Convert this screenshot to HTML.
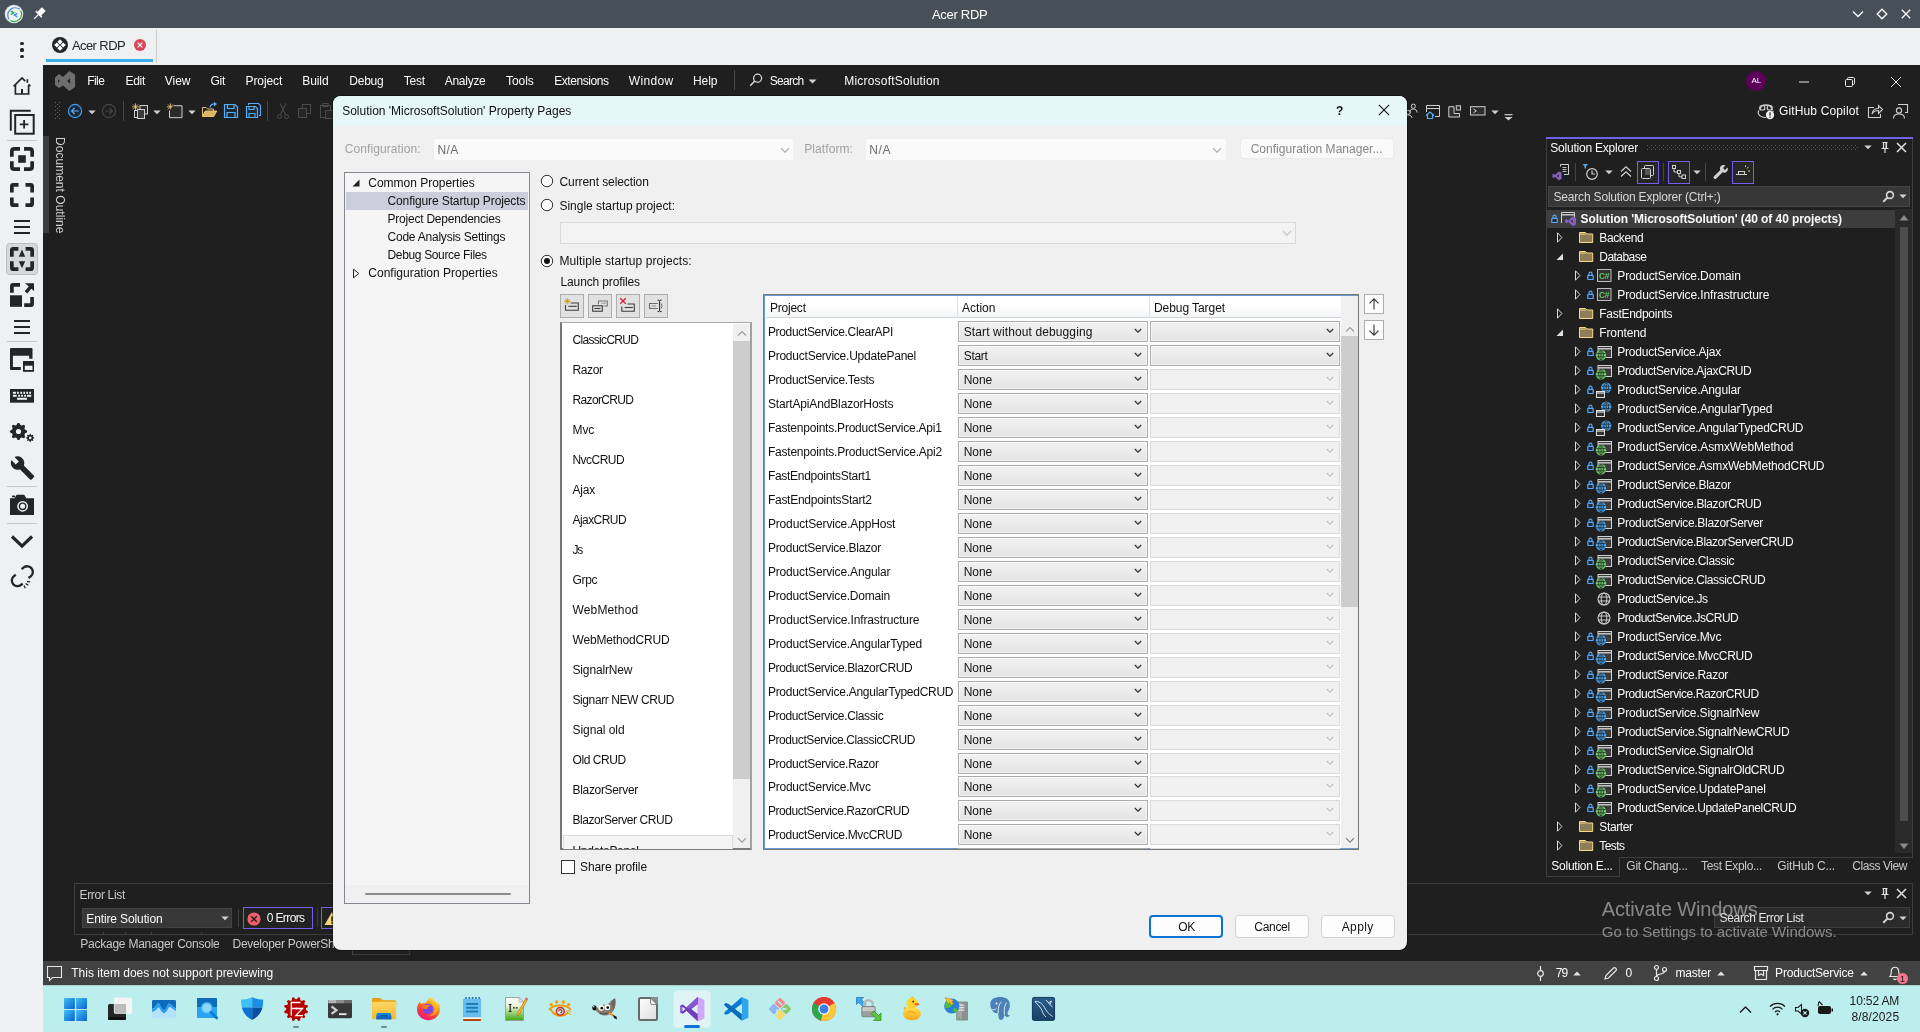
<!DOCTYPE html>
<html><head><meta charset="utf-8"><title>Acer RDP</title>
<style>
html,body{margin:0;padding:0;background:#1f1f1f}
#r{will-change:transform;position:relative;width:1920px;height:1032px;overflow:hidden;font-family:"Liberation Sans",sans-serif}
#r div,#r svg,#r span{position:absolute}
#r .t{white-space:pre;line-height:20px;height:20px}
#r svg{overflow:visible}
</style></head><body><div id="r">
<div style="left:0px;top:0px;width:1920px;height:28px;background:#475059"></div>
<span class="t" style="left:932px;top:5.300000000000001px;font-size:13px;color:#fcfcfc;letter-spacing:-0.299px;">Acer RDP</span>
<svg style="left:4px;top:4px;" width="20" height="20" viewBox="0 0 20 20"><circle cx="10" cy="10" r="9.300" fill="#d9dde0"/><circle cx="10" cy="10" r="8.600" fill="#f4f1e9"/>
<path d="M5.100 15.400A7.400 7.400 0 0 1 15.700 5.300" fill="none" stroke="#3a8ee6" stroke-width="1.200"/>
<path d="M16.600 6.600A7.400 7.400 0 0 1 6.400 16.500" fill="none" stroke="#27ae60" stroke-width="1.200"/>
<path d="M6.800 6.900l3 1.900-3 1.900" fill="none" stroke="#27ae60" stroke-width="1.400"/><path d="M13.200 9.300l-2.800 1.800 2.800 1.800" fill="none" stroke="#3a8ee6" stroke-width="1.400"/></svg>
<svg style="left:31px;top:6px;" width="16" height="16" viewBox="0 0 16 16"><g transform="rotate(45 8 8)" fill="#fcfcfc"><rect x="5.3" y="1.2" width="5.4" height="6.6"/><rect x="3.8" y="7.4" width="8.4" height="1.6"/><rect x="7.4" y="9" width="1.2" height="6"/></g></svg>
<svg style="left:1850px;top:6px;" width="16" height="16" viewBox="0 0 16 16"><path d="M3 5.5l5 5 5-5" fill="none" stroke="#fcfcfc" stroke-width="1.3"/></svg>
<svg style="left:1874px;top:6px;" width="16" height="16" viewBox="0 0 16 16"><path d="M8 3.2L12.8 8 8 12.8 3.2 8z" fill="none" stroke="#fcfcfc" stroke-width="1.3"/></svg>
<svg style="left:1898px;top:6px;" width="16" height="16" viewBox="0 0 16 16"><path d="M3.8 3.8l8.4 8.4M12.2 3.8l-8.4 8.4" fill="none" stroke="#fcfcfc" stroke-width="1.3"/></svg>
<div style="left:0px;top:28px;width:1920px;height:37px;background:#eff0f1"></div>
<div style="left:0px;top:65px;width:43px;height:967px;background:#eff0f1"></div>
<div style="left:46px;top:59px;width:107px;height:3px;background:#3daee9"></div>
<div style="left:156px;top:30px;width:1px;height:33px;background:#c9cbcd"></div>
<svg style="left:51px;top:36px;" width="18" height="18" viewBox="0 0 18 18"><circle cx="9" cy="9" r="8" fill="#232629"/><g fill="#fff"><path d="M9 3.2l2.6 2.6L9 8.4 6.4 5.8z"/><path d="M9 9.6l2.6 2.6L9 14.8 6.4 12.2z"/><path d="M5.8 6.4l2.6 2.6-2.6 2.6L3.2 9z"/><path d="M12.2 6.4l2.6 2.6-2.6 2.6L9.6 9z"/></g></svg>
<span class="t" style="left:72px;top:35.7px;font-size:13px;color:#232629;letter-spacing:-0.599px;">Acer RDP</span>
<svg style="left:134px;top:39px;" width="12" height="12" viewBox="0 0 12 12"><circle cx="6" cy="6" r="6" fill="#da4453"/><path d="M3.6 3.6l4.8 4.8M8.4 3.6L3.6 8.4" stroke="#fff" stroke-width="1.2"/></svg>
<div style="left:20.4px;top:42.1px;width:3.2px;height:3.2px;background:#232629;border-radius:50%"></div>
<div style="left:20.4px;top:48.4px;width:3.2px;height:3.2px;background:#232629;border-radius:50%"></div>
<div style="left:20.4px;top:54.6px;width:3.2px;height:3.2px;background:#232629;border-radius:50%"></div>
<svg style="left:10px;top:74px;" width="24" height="24" viewBox="0 0 24 24"><path d="M3.6 12.4L12 4l3.2 3.2M18.6 10.4l1.8 1.8" fill="none" stroke="#232629" stroke-width="1.7"/><path d="M5.4 11v9h13.2v-9" fill="none" stroke="#232629" stroke-width="1.7"/><rect x="11" y="15" width="2" height="5" fill="#232629"/><rect x="16.5" y="5.2" width="1.7" height="3.6" fill="#232629"/></svg>
<svg style="left:8px;top:108px;" width="28" height="28" viewBox="0 0 28 28"><path d="M2.8 22.8V2.8H22.8" fill="none" stroke="#232629" stroke-width="2"/><rect x="7.2" y="7" width="18.5" height="18.7" fill="none" stroke="#232629" stroke-width="2"/><path d="M11.8 16.3h8.6M16.1 12v8.6" fill="none" stroke="#232629" stroke-width="1.8"/></svg>
<div style="left:7px;top:140px;width:30px;height:1px;background:#c4c6c8"></div>
<svg style="left:10px;top:147px;" width="24" height="24" viewBox="0 0 24 24"><path d="M1.85 9.8V4.35Q1.85 1.85 4.35 1.85H10M14 1.85H19.65Q22.15 1.85 22.15 4.35V9.8M22.15 14.2V19.65Q22.15 22.15 19.65 22.15H14M10 22.15H4.35Q1.85 22.15 1.85 19.65V14.2" fill="none" stroke="#232629" stroke-width="3.7"/><rect x="8.2" y="8.2" width="7.6" height="7.6" fill="#232629"/></svg>
<svg style="left:10px;top:183.2px;" width="24" height="24" viewBox="0 0 24 24"><path d="M1.85 9.6V3.35Q1.85 1.85 3.35 1.85H8.5M15.5 1.85H20.65Q22.15 1.85 22.15 3.35V9.6M22.15 14.4V20.65Q22.15 22.15 20.65 22.15H15.5M8.5 22.15H3.35Q1.85 22.15 1.85 20.65V14.4" fill="none" stroke="#232629" stroke-width="3.7"/></svg>
<div style="left:14px;top:219.7px;width:16px;height:2.6px;background:#232629"></div>
<div style="left:14px;top:225.7px;width:16px;height:2.6px;background:#232629"></div>
<div style="left:14px;top:231.7px;width:16px;height:2.6px;background:#232629"></div>
<div style="left:6px;top:243px;width:32px;height:31.7px;background:#d6d8da;border:1px solid #bcbec0;border-radius:3.500px;box-sizing:border-box"></div>
<svg style="left:10px;top:247px;" width="24" height="24" viewBox="0 0 24 24"><path d="M1.85 9.7V3.35Q1.85 1.85 3.35 1.85H8.4M15.6 1.85H20.65Q22.15 1.85 22.15 3.35V9.7M22.15 14.3V20.65Q22.15 22.15 20.65 22.15H15.6M8.4 22.15H3.35Q1.85 22.15 1.85 20.65V14.3" fill="none" stroke="#232629" stroke-width="3.7"/><path d="M12 2.600L15.200 9.700H8.800zM12 21.200L15.200 14.200H8.800z" fill="#232629"/></svg>
<svg style="left:10px;top:283px;" width="24" height="24" viewBox="0 0 24 24"><rect x="0" y="12.300" width="12" height="11.500" fill="#232629"/><path d="M1.900 9.700V3Q1.900 1.900 3 1.900H10" fill="none" stroke="#232629" stroke-width="3.700"/><path d="M22.100 14V21Q22.100 22.100 21 22.100H14.200" fill="none" stroke="#232629" stroke-width="3.700"/><path d="M16 9.300L21.500 2.800" fill="none" stroke="#232629" stroke-width="3.400"/><path d="M15 .2H24V8z" fill="#232629"/></svg>
<div style="left:14px;top:319.7px;width:16px;height:2.6px;background:#232629"></div>
<div style="left:14px;top:325.7px;width:16px;height:2.6px;background:#232629"></div>
<div style="left:14px;top:331.7px;width:16px;height:2.6px;background:#232629"></div>
<div style="left:7px;top:341px;width:30px;height:1px;background:#c4c6c8"></div>
<svg style="left:10px;top:348px;" width="24" height="24" viewBox="0 0 24 24"><path d="M1 0H21.500Q22.500 0 22.500 1V10.800H19.200V7.800H2.900V19H10.800V22H1Q0 22 0 21V1Q0 0 1 0z" fill="#232629"/><rect x="13" y="13" width="11" height="10.800" fill="#232629"/><rect x="14.800" y="17.700" width="7.700" height="4.300" fill="#eff0f1"/></svg>
<svg style="left:10px;top:389.2px;" width="24" height="13.7" viewBox="0 0 24 13.7"><rect width="24" height="13.700" fill="#232629"/><rect x="2.900" y="2.800" width="3" height="2" fill="#eff0f1"/><rect x="7" y="2.800" width="1.800" height="2" fill="#eff0f1"/><rect x="10.25" y="2.800" width="1.800" height="2" fill="#eff0f1"/><rect x="13.3" y="2.800" width="1.800" height="2" fill="#eff0f1"/><rect x="16.25" y="2.800" width="1.800" height="2" fill="#eff0f1"/><rect x="19.2" y="2.800" width="1.800" height="2" fill="#eff0f1"/><rect x="2.900" y="5.800" width="3.800" height="2" fill="#eff0f1"/><rect x="17" y="5.800" width="4.250" height="2" fill="#eff0f1"/><rect x="8.2" y="5.800" width="1.800" height="2" fill="#eff0f1"/><rect x="11.2" y="5.800" width="1.800" height="2" fill="#eff0f1"/><rect x="14.2" y="5.800" width="1.800" height="2" fill="#eff0f1"/><rect x="7" y="8.800" width="10" height="2" fill="#eff0f1"/></svg>
<svg style="left:10px;top:421px;" width="24" height="24" viewBox="0 0 24 24"><path d="M17.06 9.66L17.06 11.34L14.91 12.44L14.41 13.66L15.15 15.96L13.96 17.15L11.66 16.41L10.44 16.91L9.34 19.06L7.66 19.06L6.56 16.91L5.34 16.41L3.04 17.15L1.85 15.96L2.59 13.66L2.09 12.44L-0.06 11.34L-0.06 9.66L2.09 8.56L2.59 7.34L1.85 5.04L3.04 3.85L5.34 4.59L6.56 4.09L7.66 1.94L9.34 1.94L10.44 4.09L11.66 4.59L13.96 3.85L15.15 5.04L14.41 7.34L14.91 8.56Z" fill="#232629"/><circle cx="8.5" cy="10.5" r="2.6" fill="#eff0f1"/><path d="M24.28 16.50L24.28 17.30L23.07 17.77L22.85 18.31L23.37 19.50L22.80 20.07L21.61 19.55L21.07 19.77L20.60 20.98L19.80 20.98L19.33 19.77L18.79 19.55L17.60 20.07L17.03 19.50L17.55 18.31L17.33 17.77L16.12 17.30L16.12 16.50L17.33 16.03L17.55 15.49L17.03 14.30L17.60 13.73L18.79 14.25L19.33 14.03L19.80 12.82L20.60 12.82L21.07 14.03L21.61 14.25L22.80 13.73L23.37 14.30L22.85 15.49L23.07 16.03Z" fill="#232629"/><circle cx="20.2" cy="16.9" r="1.3" fill="#eff0f1"/></svg>
<svg style="left:10px;top:456px;" width="24" height="25" viewBox="0 0 24 25"><path d="M22.4 20.6L11.6 9.8c1-2.7.4-5.8-1.8-7.9C7.5-.4 4.1-.8 1.4.4l4.8 4.8-3.4 3.4L-1.900 3.800C-3.200 6.500-2.700 9.900-.400 12.200c2.100 2.100 5.200 2.700 7.900 1.800l10.800 10.800c.5.5 1.200.5 1.700 0l2.400-2.400c.600-.500.600-1.300 0-1.800z" fill="#232629" transform="translate(3.2 0.6) scale(.92)"/></svg>
<div style="left:7px;top:486px;width:30px;height:1px;background:#c4c6c8"></div>
<svg style="left:10px;top:494px;" width="24" height="21" viewBox="0 0 24 21"><path d="M0 4.300h4.500L6.600.8h7.600l2.100 3.500H24V21H0z" fill="#232629"/><circle cx="12.600" cy="12.300" r="5.400" fill="#eff0f1"/><circle cx="12.600" cy="12.300" r="3.900" fill="#232629"/><circle cx="12.600" cy="12.300" r="2.500" fill="#eff0f1"/><rect x="2" y="1.600" width="3" height="1.700" fill="#232629"/></svg>
<div style="left:7px;top:523px;width:30px;height:1px;background:#c4c6c8"></div>
<svg style="left:10px;top:533px;" width="24" height="17" viewBox="0 0 24 17"><path d="M2 3.500l10 9.600 10-9.600" fill="none" stroke="#232629" stroke-width="3.2"/></svg>
<svg style="left:10px;top:565px;" width="24" height="26" viewBox="0 0 24 26"><path d="M9.5 9.500H7.200a5.600 5.600 0 0 0 0 11.200H9.500" fill="none" stroke="#232629" stroke-width="2.300" transform="rotate(-38 8 15)"/><path d="M14 3h2.800a5.600 5.600 0 0 1 0 11.200H14" fill="none" stroke="#232629" stroke-width="2.300" transform="rotate(-38 16 9) translate(1.500 -.5)"/><path d="M15.500 18.500l2.800 1.600M14 20.500l1.300 2.800M17 16.500l3.200.3" fill="none" stroke="#232629" stroke-width="1.300"/></svg>
<div style="left:43px;top:65px;width:1877px;height:920px;background:#1f1f1f"></div>
<svg style="left:55px;top:71px;" width="20" height="20" viewBox="0 0 20 20"><path d="M14.250 0L20.100 3.600V15.900L14.250 20L8 14.400L4 17.100L0 14V6.500L4 3L8 6.100ZM3 8.200V11.900L4.900 10ZM12.200 10L15.100 7.100V12.800Z" fill="#6e6e6e" fill-rule="evenodd"/></svg>
<span class="t" style="left:87.25px;top:71.0px;font-size:12px;color:#fafafa;letter-spacing:-0.584px;">File</span>
<span class="t" style="left:125.5px;top:71.0px;font-size:12px;color:#fafafa;letter-spacing:-0.295px;">Edit</span>
<span class="t" style="left:164.75px;top:71.0px;font-size:12px;color:#fafafa;letter-spacing:-0.011px;">View</span>
<span class="t" style="left:210.5px;top:71.0px;font-size:12px;color:#fafafa;letter-spacing:-0.278px;">Git</span>
<span class="t" style="left:245.5px;top:71.0px;font-size:12px;color:#fafafa;letter-spacing:-0.086px;">Project</span>
<span class="t" style="left:302.25px;top:71.0px;font-size:12px;color:#fafafa;letter-spacing:-0.087px;">Build</span>
<span class="t" style="left:349.25px;top:71.0px;font-size:12px;color:#fafafa;letter-spacing:-0.222px;">Debug</span>
<span class="t" style="left:403.75px;top:71.0px;font-size:12px;color:#fafafa;letter-spacing:-0.189px;">Test</span>
<span class="t" style="left:444.75px;top:71.0px;font-size:12px;color:#fafafa;letter-spacing:-0.278px;">Analyze</span>
<span class="t" style="left:506px;top:71.0px;font-size:12px;color:#fafafa;letter-spacing:-0.053px;">Tools</span>
<span class="t" style="left:554.25px;top:71.0px;font-size:12px;color:#fafafa;letter-spacing:-0.445px;">Extensions</span>
<span class="t" style="left:628.75px;top:71.0px;font-size:12px;color:#fafafa;letter-spacing:0.345px;">Window</span>
<span class="t" style="left:693px;top:71.0px;font-size:12px;color:#fafafa;letter-spacing:-0.045px;">Help</span>
<span class="t" style="left:769.75px;top:71.0px;font-size:12px;color:#fafafa;letter-spacing:-0.712px;">Search</span>
<span class="t" style="left:844.25px;top:71.0px;font-size:12px;color:#fafafa;letter-spacing:0.203px;">MicrosoftSolution</span>
<div style="left:734px;top:70px;width:1px;height:20px;background:#464646"></div>
<svg style="left:749px;top:73px;" width="14" height="14" viewBox="0 0 14 14"><circle cx="8.600" cy="5.200" r="4" fill="none" stroke="#d6d6d6" stroke-width="1.300"/><path d="M5.800 8L1.200 12.800" stroke="#d6d6d6" stroke-width="1.500"/></svg>
<svg style="left:808px;top:79px;" width="9" height="5" viewBox="0 0 9 5"><path d="M0.500 0.500h8L4.500 4.500z" fill="#d0d0d0"/></svg>
<div style="left:1746px;top:71px;width:20px;height:20px;background:#5c005c;border-radius:10px"></div>
<span class="t" style="left:1751.5px;top:71.3px;font-size:8px;color:#fff;letter-spacing:-0.143px;">AL</span>
<svg style="left:1796px;top:74px;" width="16" height="16" viewBox="0 0 16 16"><path d="M3 8h10" stroke="#e8e8e8" stroke-width="1"/></svg>
<svg style="left:1842px;top:74px;" width="16" height="16" viewBox="0 0 16 16"><rect x="3.500" y="5.500" width="7" height="7" rx="1.200" fill="none" stroke="#e8e8e8"/><path d="M5.500 5.500V4.700Q5.500 3.500 6.700 3.500H11.300Q12.500 3.500 12.500 4.700V9.300Q12.500 10.500 11.300 10.500H10.500" fill="none" stroke="#e8e8e8"/></svg>
<svg style="left:1888px;top:74px;" width="16" height="16" viewBox="0 0 16 16"><path d="M3 3l10 10M13 3L3 13" stroke="#e8e8e8" stroke-width="1"/></svg>
<svg style="left:55px;top:102px;" width="6" height="18" viewBox="0 0 6 18"><rect x="0" y="0" width="1" height="1" fill="#606060"/><rect x="4" y="0" width="1" height="1" fill="#606060"/><rect x="2" y="2" width="1" height="1" fill="#606060"/><rect x="0" y="4" width="1" height="1" fill="#606060"/><rect x="4" y="4" width="1" height="1" fill="#606060"/><rect x="2" y="6" width="1" height="1" fill="#606060"/><rect x="0" y="8" width="1" height="1" fill="#606060"/><rect x="4" y="8" width="1" height="1" fill="#606060"/><rect x="2" y="10" width="1" height="1" fill="#606060"/><rect x="0" y="12" width="1" height="1" fill="#606060"/><rect x="4" y="12" width="1" height="1" fill="#606060"/><rect x="2" y="14" width="1" height="1" fill="#606060"/><rect x="0" y="16" width="1" height="1" fill="#606060"/><rect x="4" y="16" width="1" height="1" fill="#606060"/></svg>
<svg style="left:67px;top:103px;" width="16" height="16" viewBox="0 0 16 16"><circle cx="8" cy="8" r="6.600" fill="#1c2a38" stroke="#3d9cf0" stroke-width="1.200"/><path d="M11.800 8H4.800M7.600 5L4.600 8l3 3" fill="none" stroke="#58aef8" stroke-width="1.200"/></svg>
<svg style="left:88.25px;top:110px;" width="8" height="5" viewBox="0 0 8 5"><path d="M0.300 0.500h7.400L4 4.300z" fill="#d0d0d0"/></svg>
<svg style="left:100.5px;top:103px;" width="16" height="16" viewBox="0 0 16 16"><circle cx="8" cy="8" r="6.600" fill="none" stroke="#454545" stroke-width="1.200"/><path d="M4.200 8H11.200M8.400 5l3 3-3 3" fill="none" stroke="#454545" stroke-width="1.200"/></svg>
<div style="left:123px;top:101px;width:1px;height:20px;background:#464646"></div>
<svg style="left:131px;top:102px;" width="18" height="18" viewBox="0 0 18 18"><g stroke="#f3cf73" stroke-width=".8"><path d="M1.0 4.9h7M4.5 1.4000000000000004v7M2.0 2.4000000000000004l5 5M7.0 2.4000000000000004l-5 5"/></g><rect x="9" y="3.500" width="7.500" height="8.500" fill="#2a2a2a" stroke="#cfcfcf"/><rect x="3.500" y="8.500" width="6" height="7" fill="none" stroke="#cfcfcf"/><rect x="6.500" y="7.500" width="7" height="9" fill="#3a3a3a" stroke="#cfcfcf"/></svg>
<svg style="left:153.25px;top:110px;" width="8" height="5" viewBox="0 0 8 5"><path d="M0.300 0.500h7.400L4 4.300z" fill="#d0d0d0"/></svg>
<svg style="left:166px;top:102px;" width="18" height="18" viewBox="0 0 18 18"><g stroke="#f3cf73" stroke-width=".8"><path d="M0.9000000000000004 4.9h7M4.4 1.4000000000000004v7M1.9000000000000004 2.4000000000000004l5 5M6.9 2.4000000000000004l-5 5"/></g><path d="M7.500 3.700H16V15.700H3.500V8.500" fill="#2a2a2a" stroke="#cfcfcf"/></svg>
<svg style="left:188.25px;top:110px;" width="8" height="5" viewBox="0 0 8 5"><path d="M0.300 0.500h7.400L4 4.300z" fill="#d0d0d0"/></svg>
<svg style="left:201px;top:101px;" width="18" height="18" viewBox="0 0 18 18"><path d="M1.500 15.500V6.500H5l1.500 1.500H12.500V10" fill="none" stroke="#e8c36d"/><path d="M1.500 15.500L4.300 10H15.700L12.800 15.500z" fill="#dcb565" stroke="#e8c36d"/><path d="M9 6.500C9.500 3.500 12 2.800 14.500 3" fill="none" stroke="#58aef8" stroke-width="1.300"/><path d="M13 .8l3 2.300-3 2.300z" fill="#58aef8"/></svg>
<svg style="left:223px;top:103px;" width="16" height="16" viewBox="0 0 16 16"><path d="M1.500 1.500H12L14.500 4V14.500H1.500z" fill="#1c2a38" stroke="#58aef8" stroke-width="1.200"/><path d="M4.500 1.500V5.500H11V1.500M4 14.500V9.500H12V14.500" fill="none" stroke="#58aef8" stroke-width="1.200"/></svg>
<svg style="left:245px;top:102px;" width="17" height="17" viewBox="0 0 17 17"><path d="M3.500 3V1.500H13.500L15.500 3.500V13.500H14" fill="none" stroke="#58aef8" stroke-width="1.100"/><path d="M1.500 4.500H10.500L12.500 6.500V15.500H1.500z" fill="#1c2a38" stroke="#58aef8" stroke-width="1.200"/><path d="M4 4.500V7.500H9V4.500M4 15.500V11.500H10V15.500" fill="none" stroke="#58aef8" stroke-width="1.100"/></svg>
<div style="left:267px;top:101px;width:1px;height:20px;background:#464646"></div>
<svg style="left:276px;top:102px;" width="14" height="18" viewBox="0 0 14 18"><path d="M4 1.500L9.500 12.500M10 1.500L4.500 12.500" stroke="#4a4a4a" stroke-width="1.100" fill="none"/><circle cx="3.500" cy="14.500" r="2" fill="none" stroke="#4a4a4a"/><circle cx="10.500" cy="14.500" r="2" fill="none" stroke="#4a4a4a"/></svg>
<svg style="left:297px;top:103px;" width="16" height="16" viewBox="0 0 16 16"><rect x="5.500" y="1.500" width="8" height="9" fill="none" stroke="#4a4a4a"/><rect x="1.500" y="5.500" width="8" height="9" fill="#262626" stroke="#4a4a4a"/></svg>
<svg style="left:319px;top:102px;" width="16" height="18" viewBox="0 0 16 18"><rect x="1.500" y="3.500" width="10" height="12" fill="none" stroke="#4a4a4a"/><rect x="4" y="1.500" width="5" height="3" fill="none" stroke="#4a4a4a"/><rect x="6.500" y="8.500" width="8" height="8" fill="#262626" stroke="#4a4a4a"/></svg>
<svg style="left:1403px;top:103px;" width="16" height="16" viewBox="0 0 16 16"><circle cx="10.300" cy="3.200" r="2.100" fill="none" stroke="#cfcfcf"/><path d="M6.800 9.500C6.800 7 8.300 6 10.300 6S14 7.200 14.200 9.500" fill="none" stroke="#cfcfcf"/><circle cx="5.300" cy="9.400" r="2" fill="none" stroke="#cfcfcf"/><path d="M1.500 15.500C1.500 13 3 12 5.300 12S8.800 13.500 9 15" fill="none" stroke="#cfcfcf"/></svg>
<svg style="left:1425px;top:103px;" width="16" height="16" viewBox="0 0 16 16"><path d="M1.500 9V2.500H14.500V13.500H10" fill="none" stroke="#cfcfcf"/><path d="M1.500 5.500H14.500" stroke="#cfcfcf"/><path d="M1 12.500L5 9l4 3.500M2.500 11.500V15.500H7.500V11.500" fill="none" stroke="#58aef8" stroke-width="1.200"/></svg>
<svg style="left:1448px;top:105px;" width="14" height="13" viewBox="0 0 14 13"><path d="M0.800 1.700H6V8.500H11.500V12H0.800Z" fill="#2d2d2d" stroke="#cfcfcf" stroke-width="1"/><rect x="8.300" y="0.800" width="4.200" height="4.200" fill="#2d2d2d" stroke="#cfcfcf" stroke-width="1"/></svg>
<svg style="left:1469.5px;top:105.5px;" width="16" height="10" viewBox="0 0 16 10"><rect x="0.500" y="0.700" width="14.500" height="8.300" fill="#2d2d2d" stroke="#cfcfcf"/><path d="M3.500 3L6.300 4.900 3.500 6.800" fill="none" stroke="#cfcfcf"/></svg>
<svg style="left:1491px;top:109.5px;" width="8" height="5" viewBox="0 0 8 5"><path d="M0.300 0.500h7.400L4 4.300z" fill="#d0d0d0"/></svg>
<svg style="left:1503.5px;top:113px;" width="9" height="8" viewBox="0 0 9 8"><path d="M0.500 1.700H8.500" stroke="#cfcfcf" stroke-width="1.200"/><path d="M0.500 4h8L4.500 7.500z" fill="#cfcfcf"/></svg>
<svg style="left:1757px;top:102px;" width="18" height="18" viewBox="0 0 18 18"><path d="M3 8C3 4.500 5 3 9 3s6 1.500 6 5" fill="none" stroke="#cfcfcf" stroke-width="1.300"/><rect x="2.800" y="3.500" width="5" height="4.500" rx="2" fill="none" stroke="#cfcfcf" stroke-width="1.200"/><rect x="10.200" y="3.500" width="5" height="4.500" rx="2" fill="none" stroke="#cfcfcf" stroke-width="1.200"/><path d="M2 8.500C1 9.500 1 11 1.500 12 3 14.500 6 15.500 9 15.500" fill="none" stroke="#cfcfcf" stroke-width="1.200"/><path d="M16 8.500V10" stroke="#cfcfcf" stroke-width="1.200"/><circle cx="13" cy="13" r="4.200" fill="#f0f0f0"/><rect x="12.400" y="10.300" width="1.200" height="3.400" fill="#1f1f1f"/><rect x="12.400" y="14.500" width="1.200" height="1.200" fill="#1f1f1f"/></svg>
<span class="t" style="left:1779px;top:101.0px;font-size:12px;color:#fafafa;letter-spacing:0.140px;">GitHub Copilot</span>
<svg style="left:1867px;top:103px;" width="17" height="16" viewBox="0 0 17 16"><path d="M7 4.500H1.500V14.500H13.500V11" fill="none" stroke="#cfcfcf" stroke-width="1.100"/><path d="M5 11C5.500 7.500 8 5.500 11.500 5.500V2.500L15.500 6.500 11.500 10.500V7.500C8.500 7.500 6.500 8.500 5 11z" fill="none" stroke="#cfcfcf" stroke-width="1.100"/></svg>
<svg style="left:1892px;top:103px;" width="17" height="16" viewBox="0 0 17 16"><path d="M6 1.500H15.500V9.500H13" fill="none" stroke="#cfcfcf" stroke-width="1.100"/><circle cx="7" cy="7.500" r="2.600" fill="none" stroke="#cfcfcf" stroke-width="1.100"/><path d="M1.500 15.500C1.500 12.500 3.500 11 7 11s5.500 1.500 5.500 4.500" fill="none" stroke="#cfcfcf" stroke-width="1.100"/></svg>
<div style="left:43px;top:136px;width:6px;height:97px;background:#3d3d3d"></div>
<span class="t" style="left:67px;top:136.700px;font-size:12px;color:#d0d0d0;transform-origin:0 0;transform:rotate(90deg);letter-spacing:0.028px;line-height:14px">Document Outline</span>
<div style="left:74px;top:883px;width:1839px;height:52px;border:1px solid #3d3d3d;box-sizing:border-box"></div>
<span class="t" style="left:79.5px;top:884.8px;font-size:12px;color:#c8c8c8;letter-spacing:-0.318px;">Error List</span>
<div style="left:82px;top:908px;width:150px;height:20px;background:#383838;border:1px solid #434343;box-sizing:border-box"></div>
<span class="t" style="left:86.3px;top:909.0px;font-size:12px;color:#fafafa;letter-spacing:-0.123px;">Entire Solution</span>
<svg style="left:221px;top:916px;" width="8" height="5" viewBox="0 0 8 5"><path d="M0.300 0.500h7.400L4 4.300z" fill="#d0d0d0"/></svg>
<div style="left:238px;top:909px;width:1px;height:18px;background:#3d3d3d"></div>
<div style="left:243px;top:907px;width:70px;height:22px;border:1px solid #7160e8;box-sizing:border-box;background:#222"></div>
<svg style="left:246.5px;top:911.5px;" width="14" height="14" viewBox="0 0 14 14"><circle cx="7" cy="7" r="6.600" fill="#ee5f6b"/><path d="M4.200 4.200l5.600 5.600M9.800 4.200L4.200 9.800" stroke="#1f1f1f" stroke-width="1.300"/></svg>
<span class="t" style="left:266.7px;top:907.7px;font-size:12px;color:#fafafa;letter-spacing:-0.609px;">0 Errors</span>
<div style="left:316.5px;top:909px;width:1px;height:18px;background:#3d3d3d"></div>
<div style="left:321px;top:907px;width:70px;height:22px;border:1px solid #7160e8;box-sizing:border-box;background:#222"></div>
<svg style="left:324px;top:911px;" width="16" height="15" viewBox="0 0 16 15"><path d="M8 1L15.500 14H.5z" fill="#f5d67b"/><rect x="7.300" y="5.500" width="1.500" height="5" fill="#1f1f1f"/><rect x="7.300" y="11.300" width="1.500" height="1.500" fill="#1f1f1f"/></svg>
<div style="left:102.5px;top:932px;width:1px;height:2px;background:#3d3d3d"></div>
<div style="left:124.7px;top:932px;width:1px;height:2px;background:#3d3d3d"></div>
<div style="left:150.5px;top:932px;width:1px;height:2px;background:#3d3d3d"></div>
<div style="left:200.5px;top:932px;width:1px;height:2px;background:#3d3d3d"></div>
<span class="t" style="left:80.3px;top:933.5px;font-size:12px;color:#c8c8c8;letter-spacing:-0.242px;">Package Manager Console</span>
<span class="t" style="left:232.5px;top:933.5px;font-size:12px;color:#c8c8c8;letter-spacing:-0.287px;">Developer PowerShell</span>
<div style="left:352px;top:934px;width:58px;height:21px;border:1px solid #3d3d3d;border-top:none;box-sizing:border-box"></div>
<svg style="left:1864px;top:891px;" width="8" height="5" viewBox="0 0 8 5"><path d="M0.300 0.500h7.400L4 4.300z" fill="#d0d0d0"/></svg>
<svg style="left:1879px;top:887px;" width="12" height="13" viewBox="0 0 12 13"><path d="M3.500 1.500H8.500M4.500 1.500V7M7.500 1.500V7M2.500 7.500H9.500M6 7.500V12" fill="none" stroke="#e0e0e0" stroke-width="1.200"/><rect x="6.500" y="1.500" width="1.500" height="5.500" fill="#e0e0e0"/></svg>
<svg style="left:1895.5px;top:888px;" width="11" height="11" viewBox="0 0 11 11"><path d="M1 1l9 9M10 1L1 10" stroke="#e0e0e0" stroke-width="1.500"/></svg>
<div style="left:1714px;top:907px;width:196px;height:21px;background:#2b2b2b;border:1px solid #3d3d3d;box-sizing:border-box"></div>
<span class="t" style="left:1719.6px;top:908.3px;font-size:12px;color:#e6e6e6;letter-spacing:-0.355px;">Search Error List</span>
<svg style="left:1882px;top:911px;" width="13" height="13" viewBox="0 0 13 13"><circle cx="8" cy="5" r="3.400" fill="none" stroke="#d6d6d6" stroke-width="1.600"/><path d="M5.600 7.400L1.300 11.700" stroke="#d6d6d6" stroke-width="2"/></svg>
<svg style="left:1899px;top:916px;" width="8" height="5" viewBox="0 0 8 5"><path d="M0.300 0.500h7.400L4 4.300z" fill="#d0d0d0"/></svg>
<span class="t" style="left:1601.8px;top:898.5px;font-size:20px;color:rgba(200,200,200,.62);letter-spacing:-0.133px;">Activate Windows</span>
<span class="t" style="left:1601.8px;top:921.9px;font-size:15px;color:rgba(200,200,200,.62);letter-spacing:-0.057px;">Go to Settings to activate Windows.</span>
<div style="left:43px;top:961px;width:1877px;height:24px;background:#424242"></div>
<svg style="left:46px;top:965px;" width="17" height="17" viewBox="0 0 17 17"><path d="M1.500 1.500H15.500V12.500H6.500L3.500 15.500V12.500H1.500z" fill="none" stroke="#e6e6e6" stroke-width="1.100"/></svg>
<span class="t" style="left:71.3px;top:962.7px;font-size:12px;color:#fafafa;letter-spacing:-0.003px;">This item does not support previewing</span>
<svg style="left:1534px;top:965px;" width="13" height="17" viewBox="0 0 13 17"><circle cx="6.500" cy="8.500" r="2.800" fill="none" stroke="#e6e6e6" stroke-width="1.200"/><path d="M6.500 1V5.700M6.500 11.300V16" stroke="#e6e6e6" stroke-width="1.200"/></svg>
<span class="t" style="left:1555.7px;top:963.0px;font-size:12px;color:#fafafa;letter-spacing:-0.824px;">79</span>
<svg style="left:1573.4px;top:971px;" width="8" height="5" viewBox="0 0 8 5"><path d="M0.300 4.500h7.400L4 .5z" fill="#e6e6e6"/></svg>
<svg style="left:1603px;top:966px;" width="15" height="15" viewBox="0 0 15 15"><path d="M2 13l1-3.500L10.500 2a1.400 1.400 0 0 1 2 0l.5.500a1.400 1.400 0 0 1 0 2L5.500 12z" fill="none" stroke="#e6e6e6" stroke-width="1.200"/></svg>
<span class="t" style="left:1625.6px;top:963.0px;font-size:12px;color:#fafafa;letter-spacing:-0.274px;">0</span>
<svg style="left:1653px;top:964px;" width="15" height="18" viewBox="0 0 15 18"><circle cx="3.500" cy="3.500" r="2" fill="none" stroke="#e6e6e6" stroke-width="1.200"/><circle cx="3.500" cy="14.500" r="2" fill="none" stroke="#e6e6e6" stroke-width="1.200"/><circle cx="11.500" cy="5.500" r="2" fill="none" stroke="#e6e6e6" stroke-width="1.200"/><path d="M3.500 5.500V12.500M11.500 7.500C11.500 10.500 3.500 9.500 3.500 12.500" fill="none" stroke="#e6e6e6" stroke-width="1.200"/></svg>
<span class="t" style="left:1675.5px;top:963.0px;font-size:12px;color:#fafafa;letter-spacing:-0.196px;">master</span>
<svg style="left:1717.2px;top:971px;" width="8" height="5" viewBox="0 0 8 5"><path d="M0.300 4.500h7.400L4 .5z" fill="#e6e6e6"/></svg>
<svg style="left:1753px;top:965px;" width="16" height="16" viewBox="0 0 16 16"><path d="M1.500 1.500H14.500V5.500H1.500zM2.500 5.500V14.500H13.500V5.500M5.500 5.500V10.500L8 9l2.500 1.500V5.500" fill="none" stroke="#e6e6e6" stroke-width="1.200"/></svg>
<span class="t" style="left:1775.1px;top:963.0px;font-size:12px;color:#fafafa;letter-spacing:-0.198px;">ProductService</span>
<svg style="left:1860px;top:971px;" width="8" height="5" viewBox="0 0 8 5"><path d="M0.300 4.500h7.400L4 .5z" fill="#e6e6e6"/></svg>
<svg style="left:1887px;top:964px;" width="16" height="17" viewBox="0 0 16 17"><path d="M3 12.500C4.500 11 4 8.500 4.500 6A3.600 3.600 0 0 1 11.500 6C12 8.500 11.500 11 13 12.500zM6.500 14.500a1.600 1.600 0 0 0 3 0" fill="none" stroke="#e6e6e6" stroke-width="1.200"/></svg>
<div style="left:1896.5px;top:972.7px;width:11px;height:11px;background:#f7768e;border-radius:5.500px"></div>
<span class="t" style="left:1900px;top:968.8px;font-size:9px;color:#111;letter-spacing:-0.506px;">1</span>
<div style="left:0px;top:985px;width:1920px;height:47px;background:#bdeeee"></div>
<div style="left:0px;top:985px;width:43px;height:47px;background:#eff0f1"></div>
<div style="left:43px;top:985px;width:1877px;height:1px;background:#a7cfd2"></div>
<svg width="0" height="0" style="left:0;top:0"><defs>
<linearGradient id="gw" x1="0" y1="0" x2="1" y2="1"><stop offset="0" stop-color="#3fc0f5"/><stop offset="1" stop-color="#0a62cf"/></linearGradient>
<linearGradient id="gsh" x1="0" y1="0" x2="1" y2="1"><stop offset="0" stop-color="#35b5f0"/><stop offset="1" stop-color="#0b57b8"/></linearGradient>
<linearGradient id="gfo" x1="0" y1="0" x2="0" y2="1"><stop offset="0" stop-color="#ffd764"/><stop offset="1" stop-color="#f5b92f"/></linearGradient>
<radialGradient id="gff" cx=".5" cy=".3" r=".8"><stop offset="0" stop-color="#ffde3d"/><stop offset=".5" stop-color="#ff8a16"/><stop offset="1" stop-color="#e31587"/></radialGradient>
<linearGradient id="gvs" x1="0" y1="0" x2="1" y2="0"><stop offset="0" stop-color="#6a3fb5"/><stop offset="1" stop-color="#c48bf2"/></linearGradient>
<linearGradient id="gvc" x1="0" y1="0" x2="1" y2="0"><stop offset="0" stop-color="#0c67b8"/><stop offset="1" stop-color="#2fa6ee"/></linearGradient>
<linearGradient id="gduck" x1="0" y1="0" x2="0" y2="1"><stop offset="0" stop-color="#ffe14a"/><stop offset="1" stop-color="#f2a81c"/></linearGradient>
</defs></svg>
<svg style="left:64px;top:998px;" width="23" height="23" viewBox="0 0 23 23"><g fill="url(#gw)"><rect x="0" y="0" width="10.900" height="10.900" rx=".7"/><rect x="12.100" y="0" width="10.900" height="10.900" rx=".7"/><rect x="0" y="12.100" width="10.900" height="10.900" rx=".7"/><rect x="12.100" y="12.100" width="10.900" height="10.900" rx=".7"/></g></svg>
<svg style="left:108px;top:998px;" width="24" height="22" viewBox="0 0 24 22"><rect x="0" y="6" width="18" height="16" rx="1.500" fill="#262626"/><rect x="0" y="19" width="18" height="3" rx="1.500" fill="#111"/><rect x="6.200" y="0" width="17.600" height="15.400" rx="1.500" fill="#f4f4f4"/><rect x="6.200" y="6" width="11.800" height="9.400" fill="#bcbcbc"/><rect x="6.200" y="0" width="17.600" height="15.400" rx="1.500" fill="none" stroke="#ffffff" stroke-width=".5"/></svg>
<svg style="left:152px;top:999.8px;" width="24" height="18.2" viewBox="0 0 24 18.2"><rect width="24" height="18.200" rx="1.500" fill="#b5e3fb"/><path d="M0 1.500Q0 0 1.500 0H22.500Q24 0 24 1.500V8.500L21 6.500 18.500 4 16.500 3.500 14 8.500 12 10.500 9.500 8 7 3.500 5.500 3.500 3 7.500 0 9z" fill="#0f6cbd"/><path d="M0 9L3 7.500 5.500 3.500H7L9.500 8 12 10.500 14 8.500 16.500 3.500 18.500 4 21 6.500 24 8.500V11L21 9 18.500 7 17 7 14.500 11.500 12 13.500 9.500 11.500 7 7.500 6 7.500 3.500 10.500 0 12z" fill="#2a9df4"/></svg>
<svg style="left:197px;top:998px;" width="22" height="22" viewBox="0 0 22 22"><rect x="0" y="0" width="20" height="20" rx="1" fill="#2aa3f2"/><path d="M0 1Q0 0 1 0H19Q20 0 20 1V9H0z" fill="#0f6cbd"/><circle cx="9.800" cy="10" r="5.300" fill="#8ed8ff" stroke="#3db4f7" stroke-width="1.400"/><path d="M14 14.200L19.800 20" stroke="#1278d8" stroke-width="2.800" stroke-linecap="round"/></svg>
<svg style="left:240.8px;top:997.2px;" width="22.4" height="23" viewBox="0 0 22.4 23"><clipPath id="shc"><path d="M11.200 0C8 1.800 4 2.600 0 2.600C0 12.500 3.200 19 11.200 23C19.200 19 22.400 12.500 22.400 2.600C18.400 2.600 14.400 1.800 11.200 0z"/></clipPath><g clip-path="url(#shc)"><rect x="0" y="0" width="11.200" height="10.500" fill="#3cc0f5"/><rect x="11.200" y="0" width="11.200" height="10.500" fill="#1b8fe3"/><rect x="0" y="10.500" width="11.200" height="12.500" fill="#0b72d3"/><rect x="11.200" y="10.500" width="11.200" height="12.500" fill="#0a4ea3"/></g></svg>
<svg style="left:284px;top:997px;" width="24.2" height="24.2" viewBox="0 0 24.2 24.2"><path d="M24.00 14.31L23.51 16.14L20.95 16.32L20.18 17.65L21.30 19.96L19.96 21.30L17.65 20.18L16.32 20.95L16.14 23.51L14.31 24.00L12.87 21.87L11.33 21.87L9.89 24.00L8.06 23.51L7.88 20.95L6.55 20.18L4.24 21.30L2.90 19.96L4.02 17.65L3.25 16.32L0.69 16.14L0.20 14.31L2.33 12.87L2.33 11.33L0.20 9.89L0.69 8.06L3.25 7.88L4.02 6.55L2.90 4.24L4.24 2.90L6.55 4.02L7.88 3.25L8.06 0.69L9.89 0.20L11.33 2.33L12.87 2.33L14.31 0.20L16.14 0.69L16.32 3.25L17.65 4.02L19.96 2.90L21.30 4.24L20.18 6.55L20.95 7.88L23.51 8.06L24.00 9.89L21.87 11.33L21.87 12.87Z" fill="#b00000"/><circle cx="12.100" cy="12.100" r="9.500" fill="#b80000"/><path d="M7.300 18.800V5.500H16.500M7.300 11.500H14" fill="none" stroke="#fff" stroke-width="1.300"/><path d="M11.500 11.500H18.500L11.800 18.600H19" fill="none" stroke="#fff" stroke-width="1.300"/></svg>
<div style="left:293px;top:1025.5px;width:6px;height:2.3px;background:#6e8a8c;border-radius:1.200px"></div>
<svg style="left:328px;top:999.8px;" width="24" height="18.2" viewBox="0 0 24 18.2"><rect width="24" height="18.200" rx="1.500" fill="#383838"/><path d="M0 1.500Q0 0 1.500 0H22.500Q24 0 24 1.500V3.200H0z" fill="#6a6a6a"/><rect x="0.500" y="0" width="7.500" height="3.200" fill="#b4b4b4"/><rect x="8" y="0" width="8" height="3.200" fill="#8c8c8c"/><path d="M3.500 6.500L8.500 10.200 3.500 14" fill="none" stroke="#cfcfcf" stroke-width="2.200"/><rect x="11" y="13.200" width="7.500" height="1.900" fill="#e6e6e6"/></svg>
<svg style="left:372px;top:998px;" width="24.2" height="21.3" viewBox="0 0 24.2 21.3"><path d="M0 1.500Q0 0 1.500 0H7.500Q8.500 0 9.300 .8L10.800 2.300H22.700Q24.200 2.300 24.200 3.800V6H0z" fill="#e8a010"/><rect x="0" y="3.800" width="24.200" height="17.500" rx="1.300" fill="url(#gfo)"/><path d="M4.400 21.300V16.900Q4.400 14.900 6.400 14.900H17.300Q19.300 14.900 19.300 16.900V21.300z" fill="#1380da"/><path d="M4.400 21.300V18.500H19.300V21.300z" fill="#0a66c2"/><rect x="8.300" y="17" width="7.300" height="1.600" rx=".8" fill="#0a58a8"/></svg>
<div style="left:381px;top:1025.5px;width:6px;height:2.3px;background:#6e8a8c;border-radius:1.200px"></div>
<svg style="left:416.5px;top:997px;" width="23" height="23.2" viewBox="0 0 23 23.2"><defs><linearGradient id="gfx" x1=".8" y1="0" x2=".2" y2="1"><stop offset="0" stop-color="#fff36a"/><stop offset=".35" stop-color="#ff980e"/><stop offset=".7" stop-color="#ff3647"/><stop offset="1" stop-color="#e31587"/></linearGradient></defs><path d="M14.500 0C15.500 2 17.500 3.200 19.500 5.500C21 7.300 21.300 6.300 21.300 5C22.800 8 23 10.500 23 12.500C23 18.500 18 23.200 11.500 23.200S0 18.500 0 12.500C0 9 1.300 6.500 3 4.500C3.200 5.800 3.800 6.700 4.500 7.200C6 5.800 7.500 5.600 9 5.800C10 3.500 12 1 14.500 0z" fill="url(#gfx)"/><circle cx="11" cy="11.700" r="5.300" fill="#7a46e8"/><path d="M5.300 10.500C7 7.500 11.500 7 14.500 9C12 8.800 10 10 10.200 12C8 12.300 5.800 11.800 5.300 10.500z" fill="#ff7a16"/><path d="M13 5.800C15.500 6 17.500 8 18 11C18.500 14.500 16 18 12 18.500C17 19.500 20.500 16 20.500 11.500C20.500 9 19 7 17.500 5.500C16 5 14.500 5.200 13 5.800z" fill="#ffbd2e" opacity=".8"/></svg>
<svg style="left:462.9px;top:997.2px;" width="18.1" height="24" viewBox="0 0 18.1 24"><rect x="2.2" y="0" width="1.600" height="3.300" rx=".6" fill="#1f6a9c"/><rect x="5.5" y="0" width="1.600" height="3.300" rx=".6" fill="#1f6a9c"/><rect x="8.8" y="0" width="1.600" height="3.300" rx=".6" fill="#1f6a9c"/><rect x="12.099999999999998" y="0" width="1.600" height="3.300" rx=".6" fill="#1f6a9c"/><rect x="15.399999999999999" y="0" width="1.600" height="3.300" rx=".6" fill="#1f6a9c"/><path d="M1 1.800H17.100Q18.100 1.800 18.100 2.800V21H0V2.800Q0 1.800 1 1.800z" fill="#67bdef"/><rect x="0" y="20.300" width="18.100" height="1.700" fill="#fbf3e6"/><path d="M0 22H18.100V23Q18.100 24 17.100 24H1Q0 24 0 23z" fill="#b3470f"/><g fill="#1c79b6"><rect x="3.200" y="6" width="11.800" height="1.900"/><rect x="3.200" y="9.800" width="11.800" height="1.900"/><rect x="3.200" y="13.600" width="11.800" height="1.900"/></g></svg>
<svg style="left:504.5px;top:997px;" width="24" height="24" viewBox="0 0 24 24"><defs><linearGradient id="gnp" x1="0" y1="0" x2="0" y2="1"><stop offset="0" stop-color="#ffffff"/><stop offset=".35" stop-color="#eef6e0"/><stop offset="1" stop-color="#3fa80f"/></linearGradient></defs><path d="M0.500 0.500H14L18.500 5V23.500H0.500z" fill="url(#gnp)" stroke="#9a9a9a" stroke-width=".9"/><path d="M14 0.500V5H18.500z" fill="#e4e4e4" stroke="#9a9a9a" stroke-width=".6"/><path d="M5.200 7.500V14.500M3.800 7.500H6.500M3.800 14.500H6.500M8 10.800H9.800M10.800 10.800H12.600" stroke="#222" stroke-width="1.200" fill="none"/><path d="M21.200 0.800L22.800 2 14 17.800 12.200 18.800 12.300 16.700z" fill="#f7c02a" stroke="#b8741a" stroke-width=".7"/><path d="M21.200 0.800L22.800 2 22.100 3.200 20.500 2z" fill="#e8507a"/></svg>
<svg style="left:548px;top:999.5px;" width="24" height="18.5" viewBox="0 0 24 18.5"><g fill="#f7a000"><circle cx="3.200" cy="4.600" r="1.700"/><circle cx="8.700" cy="2" r="1.700"/><circle cx="15.300" cy="2" r="1.700"/><circle cx="20.700" cy="4.600" r="1.700"/></g><path d="M1.500 9.500C6 4 18 4 22.500 9.500M2.500 8.500C5 15.500 14 18.500 19.500 13" fill="none" stroke="#f59800" stroke-width="1.900" stroke-linecap="round"/><path d="M18.500 11C20.500 10.300 22 10.800 22.800 12M19.500 13.500C21 13 22 13.500 22.500 14.500" fill="none" stroke="#f59800" stroke-width="1" stroke-linecap="round"/><circle cx="12.300" cy="11.300" r="3.900" fill="none" stroke="#d6291a" stroke-width="1.500"/><path d="M12.300 11.300m-1.600 0a1.600 1.600 0 1 1 1.600 1.600" fill="none" stroke="#d6291a" stroke-width="1.200"/></svg>
<svg style="left:591.5px;top:998px;" width="25.5" height="21.5" viewBox="0 0 25.5 21.5"><path d="M6 9.500C7.500 7 10 6.300 12.500 6.800C15 6.500 17 5.500 18.500 4C20 2.500 21.500 1 23 0.300C24 4 23.500 9 21.500 12.500C19.500 16 16 17.800 12 17.500C8.500 17.200 6 15.500 4.500 13C3.500 12.800 2.800 12 3 11C4 10.800 5 10.300 6 9.500z" fill="#857c72"/><path d="M18.500 4C20 2.500 21.500 1 23 0.300C24 4 23.500 9 21.500 12.500C20.500 9 19.800 6.500 18.500 4z" fill="#6f665d"/><circle cx="9.300" cy="9.800" r="2.900" fill="#fff"/><circle cx="15.300" cy="9.200" r="2.900" fill="#fff"/><circle cx="9.800" cy="10.200" r="1.400" fill="#111"/><circle cx="15.800" cy="9.600" r="1.400" fill="#111"/><ellipse cx="2.400" cy="9.800" rx="2.200" ry="2.600" fill="#111"/><circle cx="1.800" cy="8.800" r=".7" fill="#fff"/><path d="M8 15C11 16.500 14.500 16 17 14.500" fill="none" stroke="#3a332c" stroke-width=".8"/><path d="M16.500 14.500L21.500 17.800" stroke="#e88a1a" stroke-width="1.800"/><path d="M21 17l3.500 1.500.5 3-3-1.500z" fill="#1a1a1a"/></svg>
<svg style="left:638px;top:997px;" width="20" height="24" viewBox="0 0 20 24"><defs><linearGradient id="glo" x1="0" y1="0" x2="1" y2="1"><stop offset="0" stop-color="#ffffff"/><stop offset="1" stop-color="#dcdcdc"/></linearGradient></defs><path d="M2.500 1H12.500L19 7.500V21.500Q19 23 17.500 23H2.500Q1 23 1 21.500V2.500Q1 1 2.500 1z" fill="url(#glo)" stroke="#6a6a6a" stroke-width="2"/><path d="M12 0H20V8z" fill="#8a8a8a"/><path d="M12.500 1L19 7.500H14Q12.500 7.500 12.500 6z" fill="#f2f2f2" stroke="#6a6a6a" stroke-width=".8"/></svg>
<div style="left:672.8px;top:989.7px;width:38.2px;height:38.4px;background:#e0f4f6;border-radius:4px;border:1px solid #d4eef1;box-sizing:border-box"></div>
<svg style="left:679.7px;top:997px;" width="24.4" height="24.2" viewBox="0 0 24.4 24.2"><path d="M17.700 0L24.400 2.700V21.500L17.700 24.200Z" fill="#cfa6fa"/><path d="M17.700 0V24.200L6.500 13.800 2.800 16.700 0 15.300V8.900L2.800 7.500 6.500 10.400Z" fill="#9a6be2"/><path d="M17.700 0L6.500 10.400 2.800 7.500 0 8.900 4.200 12.100 0 15.300 2.800 16.700 6.500 13.800 17.700 24.200V17.200L11.200 12.100 17.700 7Z" fill="#6e41b8"/><path d="M17.700 0L6.500 10.400 8.600 12.100 17.700 7Z" fill="#8857d6"/><path d="M17.700 7.200L11.400 12.100 17.700 17Z" fill="#e0f4f6"/><path d="M2.500 9.800V14.400L5.400 12.100Z" fill="#e0f4f6"/></svg>
<div style="left:684px;top:1025px;width:16px;height:3px;background:#0a70d8;border-radius:1.500px"></div>
<svg style="left:724px;top:997px;" width="24.4" height="23.8" viewBox="0 0 24.4 23.8"><path d="M17.800 0L24.400 3V20.800L17.800 23.800Z" fill="#2fa6f0"/><path d="M17.800 0V6.800L4.300 17 1.500 17.800 0 16.200 1 14.800Z" fill="#0a7bd2"/><path d="M17.800 23.800V17L4.300 6.800 1.500 6 0 7.600 1 9Z" fill="#0b6bbd"/><path d="M17.800 7.200L11.600 11.900 17.800 16.600Z" fill="#bdeeee"/></svg>
<svg style="left:768px;top:997px;" width="24" height="24" viewBox="0 0 24 24"><g transform="rotate(45 12 12)"><rect x="3.800" y="3.800" width="7.800" height="7.800" rx="1.200" fill="#f48a8e"/><rect x="12.400" y="3.800" width="7.800" height="7.800" rx="1.200" fill="#8cc66c"/><rect x="3.800" y="12.400" width="7.800" height="7.800" rx="1.200" fill="#8fb2f2"/><rect x="12.400" y="12.400" width="7.800" height="7.800" rx="1.200" fill="#f7da6e"/></g><path d="M10.500 4.500L13.500 7.500M9 14.500V17.500M15 12H18" stroke="#bdeeee" stroke-width="1.600" stroke-linecap="round"/><circle cx="9" cy="13.500" r="1.300" fill="#bdeeee"/><circle cx="15.500" cy="12" r="1.300" fill="#bdeeee"/></svg>
<svg style="left:812px;top:997px;" width="24" height="24" viewBox="0 0 24 24"><circle cx="12" cy="12" r="12" fill="#e53a2f"/><path d="M12 12L1.600 6A12 12 0 0 0 9 23.600z" fill="#2ba84e"/><path d="M12 12L9 23.600A12 12 0 0 0 22.400 6z" fill="#fbc734"/><path d="M1.600 6A12 12 0 0 1 22.400 6H12z" fill="#e53a2f"/><circle cx="12" cy="12" r="5.700" fill="#fff"/><circle cx="12" cy="12" r="4.500" fill="#3c7de8"/></svg>
<svg style="left:855.5px;top:997px;" width="25.5" height="24" viewBox="0 0 25.5 24"><path d="M0.500 0.500H7.500L5.300 2.700 9.800 7.200 7.200 9.800 2.700 5.300 0.500 7.500z" fill="#3aa8ee" stroke="#1a70b8" stroke-width=".7"/><path d="M8.200 10V7.500A4.300 4.300 0 0 1 16.800 7.500V10" fill="none" stroke="#b8b8b8" stroke-width="2.400"/><rect x="5.800" y="9.500" width="13.400" height="10.300" rx="1" fill="#9c9c9c" stroke="#6e6e6e" stroke-width=".7"/><rect x="6.500" y="10.200" width="12" height="4" fill="#c8c8c8"/><path d="M25 23.500H17.500L19.800 21.200 15.300 16.700 18 14 22.500 18.500 25 16z" fill="#5cc83a" stroke="#2d8a1c" stroke-width=".7"/></svg>
<svg style="left:903px;top:997.2px;" width="18.7" height="23.3" viewBox="0 0 18.7 23.3"><ellipse cx="9" cy="16.800" rx="9" ry="6.500" fill="url(#gduck)"/><path d="M1 13C0 10 2 9 4 11z" fill="#f5b81c"/><circle cx="9" cy="6.200" r="5.600" fill="#ffd42e"/><path d="M11.500 6.500C14 5.500 16 6 16.500 7.300C15.500 8.800 13 9 11.500 8z" fill="#f0641e"/><circle cx="10.200" cy="4.600" r=".9" fill="#2a1a00"/><path d="M8 .8C9 -.3 10.500 0 10.500 1.200" fill="none" stroke="#f2a81c" stroke-width="1"/><path d="M4 15.500C6.500 14 10 14.500 12 16.500" fill="none" stroke="#e89a10" stroke-width="1"/></svg>
<svg style="left:944px;top:997px;" width="24" height="24" viewBox="0 0 24 24"><rect x="12.800" y="5" width="10.500" height="18" fill="#a6a6a6" stroke="#6e6e6e" stroke-width=".7"/><rect x="18" y="5" width="5.300" height="18" fill="#888" opacity=".7"/><rect x="14.300" y="7.500" width="6" height="1.300" fill="#e0e0e0"/><rect x="14.300" y="10" width="6" height="1.300" fill="#e0e0e0"/><rect x="14.300" y="12.500" width="6" height="1.300" fill="#e0e0e0"/><circle cx="15.500" cy="21" r=".9" fill="#3c3"/><circle cx="7.800" cy="9" r="7.600" fill="#2b7fd8"/><path d="M2.500 4.500C5 3 8.500 4.500 8 7.500S4.500 11.500 1.500 11C0.500 8.500 1 6 2.500 4.500zM9 11.500C12 10.500 14.500 12 13.500 14.500C12 16.500 9.500 15.500 9 11.500z" fill="#4fbc3c"/><path d="M1 0.500L10 3.200 7.800 4.200 9.500 7 7.500 8 5.800 5.300 4 6.800z" fill="#f7bd2e" stroke="#b8860b" stroke-width=".5"/></svg>
<svg style="left:989.3px;top:997.4px;" width="22" height="23" viewBox="0 0 22 23"><path d="M4 1.800C7.500 -.5 14.500 -.5 18 1.800C22 4.800 21.500 11.500 18.500 15.500C18.500 17.800 19.500 18.500 21 18.300C19.500 20.500 16.500 20.500 15.500 17.800C14.800 20.500 14.300 23 12 23S9.300 19.500 9.300 16C7 17 4 16 2.500 12.300C.5 7.500 1 3.800 4 1.800z" fill="#4a82b8"/><path d="M9.300 16C8.800 11.500 9.800 7.500 12.300 4.700M15.500 17.800C14.700 13 15.500 8.500 17.500 5.500M2.500 12.300C4 13.300 6.500 12.800 7.500 11.300" fill="none" stroke="#eaf2f9" stroke-width=".9"/><circle cx="7.500" cy="6.500" r=".9" fill="#fff"/></svg>
<svg style="left:1032.3px;top:997px;" width="23" height="23.8" viewBox="0 0 23 23.8"><defs><linearGradient id="gmy" x1="0" y1="0" x2="0" y2="1"><stop offset="0" stop-color="#2a5f8f"/><stop offset="1" stop-color="#183f66"/></linearGradient></defs><rect width="23" height="23.800" rx="2.500" fill="url(#gmy)"/><rect x=".4" y=".4" width="22.200" height="23" rx="2.200" fill="none" stroke="#143857" stroke-width=".8"/><path d="M3 4.500C6.500 4 10.500 6.500 12.500 10.500C14.500 14 16.500 17 20.500 19.500M3 4.500C6 8 8.500 10 10 13.500C11 16 11.500 18 14 20" fill="none" stroke="#e6eef6" stroke-width=".9"/><path d="M14 3L16.500 5.800 19.500 4 17.800 7.500 20.500 10M16.500 5.800L17.800 7.500" fill="none" stroke="#e6eef6" stroke-width=".9"/></svg>
<svg style="left:1738px;top:1004px;" width="15" height="11" viewBox="0 0 15 11"><path d="M2 8.500L7.500 3l5.500 5.500" fill="none" stroke="#1a1a1a" stroke-width="1.400"/></svg>
<svg style="left:1769px;top:1001px;" width="17" height="15" viewBox="0 0 17 15"><path d="M1 5.500A10.500 10.500 0 0 1 16 5.500" fill="none" stroke="#1a1a1a" stroke-width="1.200"/><path d="M3.500 8.300A7 7 0 0 1 13.500 8.300" fill="none" stroke="#1a1a1a" stroke-width="1.200"/><path d="M6 11A3.500 3.500 0 0 1 11 11" fill="none" stroke="#1a1a1a" stroke-width="1.200"/><circle cx="8.500" cy="13.300" r="1.100" fill="#1a1a1a"/></svg>
<svg style="left:1794px;top:1002px;" width="17" height="17" viewBox="0 0 17 17"><path d="M1.500 5.500H4L7.500 2.500V12L4 9H1.500z" fill="none" stroke="#1a1a1a" stroke-width="1.100"/><circle cx="11" cy="11" r="4.200" fill="#1a1a1a"/><path d="M9.300 9.300l3.400 3.400M12.700 9.300l-3.400 3.400" stroke="#bdeeee" stroke-width="1.100"/></svg>
<svg style="left:1816px;top:1001px;" width="18" height="16" viewBox="0 0 18 16"><rect x="2.500" y="5.500" width="12" height="7" rx="1" fill="#1a1a1a" stroke="#1a1a1a"/><rect x="15.500" y="7.500" width="1.500" height="3" fill="#1a1a1a"/><path d="M3 0.500L2 5M3 0.500L6.500 4" stroke="#1a1a1a" stroke-width="1.100" fill="none"/></svg>
<span class="t" style="left:1849.6px;top:990.6px;font-size:12px;color:#1a1a1a;letter-spacing:-0.138px;">10:52 AM</span>
<span class="t" style="left:1851.5px;top:1006.9px;font-size:12px;color:#1a1a1a;letter-spacing:0.124px;">8/8/2025</span>
<div style="left:1546px;top:137px;width:367px;height:720.5px;background:#1f1f1f;border:1px solid #3d3d3d;border-top:none;box-sizing:border-box"></div>
<div style="left:1546px;top:137px;width:367px;height:2px;background:#7160e8"></div>
<span class="t" style="left:1550.3px;top:138.0px;font-size:12px;color:#fafafa;letter-spacing:-0.217px;">Solution Explorer</span>
<svg style="left:1647px;top:145px;" width="210" height="5" viewBox="0 0 210 5"><rect x="0" y="0" width="1" height="1" fill="#5a5a5a"/><rect x="4" y="0" width="1" height="1" fill="#5a5a5a"/><rect x="8" y="0" width="1" height="1" fill="#5a5a5a"/><rect x="12" y="0" width="1" height="1" fill="#5a5a5a"/><rect x="16" y="0" width="1" height="1" fill="#5a5a5a"/><rect x="20" y="0" width="1" height="1" fill="#5a5a5a"/><rect x="24" y="0" width="1" height="1" fill="#5a5a5a"/><rect x="28" y="0" width="1" height="1" fill="#5a5a5a"/><rect x="32" y="0" width="1" height="1" fill="#5a5a5a"/><rect x="36" y="0" width="1" height="1" fill="#5a5a5a"/><rect x="40" y="0" width="1" height="1" fill="#5a5a5a"/><rect x="44" y="0" width="1" height="1" fill="#5a5a5a"/><rect x="48" y="0" width="1" height="1" fill="#5a5a5a"/><rect x="52" y="0" width="1" height="1" fill="#5a5a5a"/><rect x="56" y="0" width="1" height="1" fill="#5a5a5a"/><rect x="60" y="0" width="1" height="1" fill="#5a5a5a"/><rect x="64" y="0" width="1" height="1" fill="#5a5a5a"/><rect x="68" y="0" width="1" height="1" fill="#5a5a5a"/><rect x="72" y="0" width="1" height="1" fill="#5a5a5a"/><rect x="76" y="0" width="1" height="1" fill="#5a5a5a"/><rect x="80" y="0" width="1" height="1" fill="#5a5a5a"/><rect x="84" y="0" width="1" height="1" fill="#5a5a5a"/><rect x="88" y="0" width="1" height="1" fill="#5a5a5a"/><rect x="92" y="0" width="1" height="1" fill="#5a5a5a"/><rect x="96" y="0" width="1" height="1" fill="#5a5a5a"/><rect x="100" y="0" width="1" height="1" fill="#5a5a5a"/><rect x="104" y="0" width="1" height="1" fill="#5a5a5a"/><rect x="108" y="0" width="1" height="1" fill="#5a5a5a"/><rect x="112" y="0" width="1" height="1" fill="#5a5a5a"/><rect x="116" y="0" width="1" height="1" fill="#5a5a5a"/><rect x="120" y="0" width="1" height="1" fill="#5a5a5a"/><rect x="124" y="0" width="1" height="1" fill="#5a5a5a"/><rect x="128" y="0" width="1" height="1" fill="#5a5a5a"/><rect x="132" y="0" width="1" height="1" fill="#5a5a5a"/><rect x="136" y="0" width="1" height="1" fill="#5a5a5a"/><rect x="140" y="0" width="1" height="1" fill="#5a5a5a"/><rect x="144" y="0" width="1" height="1" fill="#5a5a5a"/><rect x="148" y="0" width="1" height="1" fill="#5a5a5a"/><rect x="152" y="0" width="1" height="1" fill="#5a5a5a"/><rect x="156" y="0" width="1" height="1" fill="#5a5a5a"/><rect x="160" y="0" width="1" height="1" fill="#5a5a5a"/><rect x="164" y="0" width="1" height="1" fill="#5a5a5a"/><rect x="168" y="0" width="1" height="1" fill="#5a5a5a"/><rect x="172" y="0" width="1" height="1" fill="#5a5a5a"/><rect x="176" y="0" width="1" height="1" fill="#5a5a5a"/><rect x="180" y="0" width="1" height="1" fill="#5a5a5a"/><rect x="184" y="0" width="1" height="1" fill="#5a5a5a"/><rect x="188" y="0" width="1" height="1" fill="#5a5a5a"/><rect x="192" y="0" width="1" height="1" fill="#5a5a5a"/><rect x="196" y="0" width="1" height="1" fill="#5a5a5a"/><rect x="200" y="0" width="1" height="1" fill="#5a5a5a"/><rect x="204" y="0" width="1" height="1" fill="#5a5a5a"/><rect x="208" y="0" width="1" height="1" fill="#5a5a5a"/><rect x="2" y="2" width="1" height="1" fill="#5a5a5a"/><rect x="6" y="2" width="1" height="1" fill="#5a5a5a"/><rect x="10" y="2" width="1" height="1" fill="#5a5a5a"/><rect x="14" y="2" width="1" height="1" fill="#5a5a5a"/><rect x="18" y="2" width="1" height="1" fill="#5a5a5a"/><rect x="22" y="2" width="1" height="1" fill="#5a5a5a"/><rect x="26" y="2" width="1" height="1" fill="#5a5a5a"/><rect x="30" y="2" width="1" height="1" fill="#5a5a5a"/><rect x="34" y="2" width="1" height="1" fill="#5a5a5a"/><rect x="38" y="2" width="1" height="1" fill="#5a5a5a"/><rect x="42" y="2" width="1" height="1" fill="#5a5a5a"/><rect x="46" y="2" width="1" height="1" fill="#5a5a5a"/><rect x="50" y="2" width="1" height="1" fill="#5a5a5a"/><rect x="54" y="2" width="1" height="1" fill="#5a5a5a"/><rect x="58" y="2" width="1" height="1" fill="#5a5a5a"/><rect x="62" y="2" width="1" height="1" fill="#5a5a5a"/><rect x="66" y="2" width="1" height="1" fill="#5a5a5a"/><rect x="70" y="2" width="1" height="1" fill="#5a5a5a"/><rect x="74" y="2" width="1" height="1" fill="#5a5a5a"/><rect x="78" y="2" width="1" height="1" fill="#5a5a5a"/><rect x="82" y="2" width="1" height="1" fill="#5a5a5a"/><rect x="86" y="2" width="1" height="1" fill="#5a5a5a"/><rect x="90" y="2" width="1" height="1" fill="#5a5a5a"/><rect x="94" y="2" width="1" height="1" fill="#5a5a5a"/><rect x="98" y="2" width="1" height="1" fill="#5a5a5a"/><rect x="102" y="2" width="1" height="1" fill="#5a5a5a"/><rect x="106" y="2" width="1" height="1" fill="#5a5a5a"/><rect x="110" y="2" width="1" height="1" fill="#5a5a5a"/><rect x="114" y="2" width="1" height="1" fill="#5a5a5a"/><rect x="118" y="2" width="1" height="1" fill="#5a5a5a"/><rect x="122" y="2" width="1" height="1" fill="#5a5a5a"/><rect x="126" y="2" width="1" height="1" fill="#5a5a5a"/><rect x="130" y="2" width="1" height="1" fill="#5a5a5a"/><rect x="134" y="2" width="1" height="1" fill="#5a5a5a"/><rect x="138" y="2" width="1" height="1" fill="#5a5a5a"/><rect x="142" y="2" width="1" height="1" fill="#5a5a5a"/><rect x="146" y="2" width="1" height="1" fill="#5a5a5a"/><rect x="150" y="2" width="1" height="1" fill="#5a5a5a"/><rect x="154" y="2" width="1" height="1" fill="#5a5a5a"/><rect x="158" y="2" width="1" height="1" fill="#5a5a5a"/><rect x="162" y="2" width="1" height="1" fill="#5a5a5a"/><rect x="166" y="2" width="1" height="1" fill="#5a5a5a"/><rect x="170" y="2" width="1" height="1" fill="#5a5a5a"/><rect x="174" y="2" width="1" height="1" fill="#5a5a5a"/><rect x="178" y="2" width="1" height="1" fill="#5a5a5a"/><rect x="182" y="2" width="1" height="1" fill="#5a5a5a"/><rect x="186" y="2" width="1" height="1" fill="#5a5a5a"/><rect x="190" y="2" width="1" height="1" fill="#5a5a5a"/><rect x="194" y="2" width="1" height="1" fill="#5a5a5a"/><rect x="198" y="2" width="1" height="1" fill="#5a5a5a"/><rect x="202" y="2" width="1" height="1" fill="#5a5a5a"/><rect x="206" y="2" width="1" height="1" fill="#5a5a5a"/><rect x="210" y="2" width="1" height="1" fill="#5a5a5a"/><rect x="0" y="4" width="1" height="1" fill="#5a5a5a"/><rect x="4" y="4" width="1" height="1" fill="#5a5a5a"/><rect x="8" y="4" width="1" height="1" fill="#5a5a5a"/><rect x="12" y="4" width="1" height="1" fill="#5a5a5a"/><rect x="16" y="4" width="1" height="1" fill="#5a5a5a"/><rect x="20" y="4" width="1" height="1" fill="#5a5a5a"/><rect x="24" y="4" width="1" height="1" fill="#5a5a5a"/><rect x="28" y="4" width="1" height="1" fill="#5a5a5a"/><rect x="32" y="4" width="1" height="1" fill="#5a5a5a"/><rect x="36" y="4" width="1" height="1" fill="#5a5a5a"/><rect x="40" y="4" width="1" height="1" fill="#5a5a5a"/><rect x="44" y="4" width="1" height="1" fill="#5a5a5a"/><rect x="48" y="4" width="1" height="1" fill="#5a5a5a"/><rect x="52" y="4" width="1" height="1" fill="#5a5a5a"/><rect x="56" y="4" width="1" height="1" fill="#5a5a5a"/><rect x="60" y="4" width="1" height="1" fill="#5a5a5a"/><rect x="64" y="4" width="1" height="1" fill="#5a5a5a"/><rect x="68" y="4" width="1" height="1" fill="#5a5a5a"/><rect x="72" y="4" width="1" height="1" fill="#5a5a5a"/><rect x="76" y="4" width="1" height="1" fill="#5a5a5a"/><rect x="80" y="4" width="1" height="1" fill="#5a5a5a"/><rect x="84" y="4" width="1" height="1" fill="#5a5a5a"/><rect x="88" y="4" width="1" height="1" fill="#5a5a5a"/><rect x="92" y="4" width="1" height="1" fill="#5a5a5a"/><rect x="96" y="4" width="1" height="1" fill="#5a5a5a"/><rect x="100" y="4" width="1" height="1" fill="#5a5a5a"/><rect x="104" y="4" width="1" height="1" fill="#5a5a5a"/><rect x="108" y="4" width="1" height="1" fill="#5a5a5a"/><rect x="112" y="4" width="1" height="1" fill="#5a5a5a"/><rect x="116" y="4" width="1" height="1" fill="#5a5a5a"/><rect x="120" y="4" width="1" height="1" fill="#5a5a5a"/><rect x="124" y="4" width="1" height="1" fill="#5a5a5a"/><rect x="128" y="4" width="1" height="1" fill="#5a5a5a"/><rect x="132" y="4" width="1" height="1" fill="#5a5a5a"/><rect x="136" y="4" width="1" height="1" fill="#5a5a5a"/><rect x="140" y="4" width="1" height="1" fill="#5a5a5a"/><rect x="144" y="4" width="1" height="1" fill="#5a5a5a"/><rect x="148" y="4" width="1" height="1" fill="#5a5a5a"/><rect x="152" y="4" width="1" height="1" fill="#5a5a5a"/><rect x="156" y="4" width="1" height="1" fill="#5a5a5a"/><rect x="160" y="4" width="1" height="1" fill="#5a5a5a"/><rect x="164" y="4" width="1" height="1" fill="#5a5a5a"/><rect x="168" y="4" width="1" height="1" fill="#5a5a5a"/><rect x="172" y="4" width="1" height="1" fill="#5a5a5a"/><rect x="176" y="4" width="1" height="1" fill="#5a5a5a"/><rect x="180" y="4" width="1" height="1" fill="#5a5a5a"/><rect x="184" y="4" width="1" height="1" fill="#5a5a5a"/><rect x="188" y="4" width="1" height="1" fill="#5a5a5a"/><rect x="192" y="4" width="1" height="1" fill="#5a5a5a"/><rect x="196" y="4" width="1" height="1" fill="#5a5a5a"/><rect x="200" y="4" width="1" height="1" fill="#5a5a5a"/><rect x="204" y="4" width="1" height="1" fill="#5a5a5a"/><rect x="208" y="4" width="1" height="1" fill="#5a5a5a"/></svg>
<svg style="left:1864px;top:145px;" width="8" height="5" viewBox="0 0 8 5"><path d="M0.300 0.500h7.400L4 4.300z" fill="#d0d0d0"/></svg>
<svg style="left:1878.5px;top:141px;" width="12" height="13" viewBox="0 0 12 13"><path d="M3.500 1.500H8.500M4.500 1.500V7M7.500 1.500V7M2.500 7.500H9.500M6 7.500V12" fill="none" stroke="#e0e0e0" stroke-width="1.200"/><rect x="6.500" y="1.500" width="1.500" height="5.500" fill="#e0e0e0"/></svg>
<svg style="left:1895.5px;top:142px;" width="11" height="11" viewBox="0 0 11 11"><path d="M1 1l9 9M10 1L1 10" stroke="#e0e0e0" stroke-width="1.500"/></svg>
<svg style="left:1552px;top:163px;" width="18" height="18" viewBox="0 0 18 18"><path d="M8.500 3.500V1.500H16.500V11.500H12" fill="none" stroke="#d0d0d0"/><path d="M10.500 4.500H14.500M10.500 6.500H14.500M10.500 8.500H14.500" stroke="#d0d0d0" stroke-width=".9"/><path d="M6.800 8.500L9.500 9.600V16L6.800 17.200 3 13.700 1.500 14.900.5 14.400V11.300L1.500 10.800 3 12zM6.800 11.300L4.800 12.900 6.800 14.400z" fill="#8661c5" fill-rule="evenodd"/></svg>
<div style="left:1575px;top:163px;width:1px;height:18px;background:#464646"></div>
<svg style="left:1582px;top:163px;" width="18" height="18" viewBox="0 0 18 18"><path d="M0.500 1H6L4 3.500V5.500H2.500V3.500z" fill="#4aa8f5"/><circle cx="10" cy="11" r="5.300" fill="none" stroke="#d0d0d0" stroke-width="1.200"/><path d="M10 7.500V11H13" fill="none" stroke="#d0d0d0" stroke-width="1.200"/></svg>
<svg style="left:1605px;top:170px;" width="8" height="5" viewBox="0 0 8 5"><path d="M0.300 0.500h7.400L4 4.300z" fill="#d0d0d0"/></svg>
<svg style="left:1619px;top:165px;" width="14" height="14" viewBox="0 0 14 14"><path d="M2 6.500L7 1.800 12 6.500M2 11.500L7 6.800 12 11.500" fill="none" stroke="#d0d0d0" stroke-width="1.300"/></svg>
<div style="left:1637px;top:160.5px;width:22px;height:23px;border:1px solid #7160e8;box-sizing:border-box;background:#262626"></div>
<svg style="left:1640px;top:164px;" width="16" height="16" viewBox="0 0 16 16"><rect x="4.500" y="1.500" width="9" height="10" rx="1" fill="none" stroke="#d0d0d0"/><rect x="1.500" y="4.500" width="9" height="10" rx="1" fill="#262626" stroke="#d0d0d0"/><rect x="5" y="5" width="5" height="6" fill="#555"/></svg>
<div style="left:1662.5px;top:163px;width:1px;height:18px;background:#464646"></div>
<div style="left:1668px;top:160.5px;width:22px;height:23px;border:1px solid #7160e8;box-sizing:border-box;background:#262626"></div>
<svg style="left:1671px;top:164px;" width="16" height="16" viewBox="0 0 16 16"><rect x="1.500" y="1.500" width="3" height="3" fill="none" stroke="#d0d0d0"/><rect x="6.500" y="6.500" width="3" height="3" fill="none" stroke="#d0d0d0"/><rect x="11" y="11" width="3.500" height="3.500" fill="none" stroke="#d0d0d0"/><path d="M3 4.500V8H6.500M8 9.500V12.800H11" fill="none" stroke="#d0d0d0"/></svg>
<svg style="left:1692.5px;top:170px;" width="8" height="5" viewBox="0 0 8 5"><path d="M0.300 0.500h7.400L4 4.300z" fill="#d0d0d0"/></svg>
<div style="left:1705px;top:163px;width:1px;height:18px;background:#464646"></div>
<svg style="left:1712px;top:163px;" width="18" height="18" viewBox="0 0 18 18"><path d="M15.500 4.500L13 7 11 5 13.500 2.500C11.500 1.500 9.500 2 8.500 3.500 7.700 4.700 7.800 6 8.300 7L2 13.300A1.600 1.600 0 0 0 4.300 15.600L10.700 9.300C12 10 13.500 9.800 14.700 8.700 15.900 7.500 16.200 6 15.500 4.500z" fill="#d0d0d0"/></svg>
<div style="left:1732px;top:160.5px;width:22px;height:23px;border:1px solid #7160e8;box-sizing:border-box;background:#262626"></div>
<svg style="left:1735px;top:164px;" width="16" height="16" viewBox="0 0 16 16"><path d="M1 10.500H12M3.500 10.500V7.500H9.500V10.500" fill="none" stroke="#d0d0d0" stroke-width="1.100"/><g stroke="#f3cf73" stroke-width="1"><path d="M12 4.500L13.500 3M13 7H15M10.500 3V1.500"/></g></svg>
<div style="left:1548px;top:186px;width:362px;height:21px;background:#373737;border:1px solid #454545;box-sizing:border-box"></div>
<span class="t" style="left:1553.5px;top:187.0px;font-size:12px;color:#d8d8d8;letter-spacing:-0.184px;">Search Solution Explorer (Ctrl+;)</span>
<svg style="left:1882px;top:190px;" width="13" height="13" viewBox="0 0 13 13"><circle cx="8" cy="5" r="3.400" fill="none" stroke="#d6d6d6" stroke-width="1.600"/><path d="M5.600 7.400L1.300 11.700" stroke="#d6d6d6" stroke-width="2"/></svg>
<svg style="left:1899px;top:194px;" width="8" height="5" viewBox="0 0 8 5"><path d="M0.300 0.500h7.400L4 4.300z" fill="#d0d0d0"/></svg>
<div style="left:1547px;top:209.5px;width:348.5px;height:18.5px;background:#3d3d3d"></div>
<svg style="left:1550.5px;top:214.2px;" width="7" height="9.5" viewBox="0 0 7 9.5"><rect x="0.800" y="4.300" width="5.400" height="4.200" rx=".6" fill="#1c2a38" stroke="#55aaff" stroke-width="1.200"/><path d="M2 4V2.600a1.500 1.500 0 0 1 3 0V4" fill="none" stroke="#55aaff" stroke-width="1.100"/></svg>
<svg style="left:1561px;top:211.2px;" width="16" height="15" viewBox="0 0 16 15"><path d="M0.500 12V1.500H13.500V6" fill="none" stroke="#d0d0d0" stroke-width="1"/><path d="M0.500 3.800H13.500" stroke="#d0d0d0" stroke-width="1.400"/><path d="M11.800 5.500L15 6.800V13.600L11.800 14.900 7.300 10.900 5.500 12.300 4.300 11.700V8.700L5.500 8.100 7.300 9.500zM11.800 8.500L9.500 10.200 11.800 11.900z" fill="#8661c5" fill-rule="evenodd"/></svg>
<span class="t" style="left:1580.6px;top:209.1px;font-size:12px;color:#fafafa;font-weight:bold;letter-spacing:-0.076px;">Solution 'MicrosoftSolution' (40 of 40 projects)</span>
<svg style="left:1556px;top:232.2px;" width="8" height="11" viewBox="0 0 8 11"><path d="M1.500 0.800L5.900 5.500 1.500 10.200z" fill="none" stroke="#dcdcdc" stroke-width="1"/></svg>
<svg style="left:1578.9px;top:232.1px;" width="14.2" height="11" viewBox="0 0 14.2 11"><path d="M0.500 0.500H6.500L8 2H13.700V10.500H0.500Z" fill="#8e7e57" stroke="#fcd98a" stroke-width="1"/><path d="M0.500 2.100H6.800" stroke="#fcd98a" stroke-width=".9"/></svg>
<span class="t" style="left:1599.3px;top:228.1px;font-size:12px;color:#fafafa;letter-spacing:-0.386px;">Backend</span>
<svg style="left:1556px;top:253.09999999999997px;" width="8" height="8" viewBox="0 0 8 8"><path d="M7 0.500V7H0.500z" fill="#e0e0e0"/></svg>
<svg style="left:1578.9px;top:251.1px;" width="14.2" height="11" viewBox="0 0 14.2 11"><path d="M0.500 0.500H6.500L8 2H13.700V10.500H0.500Z" fill="#8e7e57" stroke="#fcd98a" stroke-width="1"/><path d="M0.500 2.100H6.800" stroke="#fcd98a" stroke-width=".9"/></svg>
<span class="t" style="left:1599.3px;top:247.09999999999997px;font-size:12px;color:#fafafa;letter-spacing:-0.546px;">Database</span>
<svg style="left:1573.7px;top:270.2px;" width="8" height="11" viewBox="0 0 8 11"><path d="M1.500 0.800L5.900 5.500 1.500 10.200z" fill="none" stroke="#dcdcdc" stroke-width="1"/></svg>
<svg style="left:1586.7px;top:271.2px;" width="7" height="9.5" viewBox="0 0 7 9.5"><rect x="0.800" y="4.300" width="5.400" height="4.200" rx=".6" fill="#1c2a38" stroke="#55aaff" stroke-width="1.200"/><path d="M2 4V2.600a1.500 1.500 0 0 1 3 0V4" fill="none" stroke="#55aaff" stroke-width="1.100"/></svg>
<svg style="left:1597px;top:269.2px;" width="15" height="13" viewBox="0 0 15 13"><rect x="0.500" y="0.500" width="13.500" height="12" fill="#333" stroke="#bdbdbd" stroke-width="1"/></svg>
<span class="t" style="left:1599px;top:265.7px;font-size:8.500px;font-weight:bold;color:#5fc95f;letter-spacing:-0.500px">C#</span>
<span class="t" style="left:1617.3px;top:266.09999999999997px;font-size:12px;color:#fafafa;letter-spacing:-0.127px;">ProductService.Domain</span>
<svg style="left:1573.7px;top:289.2px;" width="8" height="11" viewBox="0 0 8 11"><path d="M1.500 0.800L5.900 5.500 1.500 10.200z" fill="none" stroke="#dcdcdc" stroke-width="1"/></svg>
<svg style="left:1586.7px;top:290.2px;" width="7" height="9.5" viewBox="0 0 7 9.5"><rect x="0.800" y="4.300" width="5.400" height="4.200" rx=".6" fill="#1c2a38" stroke="#55aaff" stroke-width="1.200"/><path d="M2 4V2.600a1.500 1.500 0 0 1 3 0V4" fill="none" stroke="#55aaff" stroke-width="1.100"/></svg>
<svg style="left:1597px;top:288.2px;" width="15" height="13" viewBox="0 0 15 13"><rect x="0.500" y="0.500" width="13.500" height="12" fill="#333" stroke="#bdbdbd" stroke-width="1"/></svg>
<span class="t" style="left:1599px;top:284.7px;font-size:8.500px;font-weight:bold;color:#5fc95f;letter-spacing:-0.500px">C#</span>
<span class="t" style="left:1617.3px;top:285.09999999999997px;font-size:12px;color:#fafafa;letter-spacing:-0.117px;">ProductService.Infrastructure</span>
<svg style="left:1556px;top:308.2px;" width="8" height="11" viewBox="0 0 8 11"><path d="M1.500 0.800L5.900 5.500 1.500 10.200z" fill="none" stroke="#dcdcdc" stroke-width="1"/></svg>
<svg style="left:1578.9px;top:308.09999999999997px;" width="14.2" height="11" viewBox="0 0 14.2 11"><path d="M0.500 0.500H6.500L8 2H13.700V10.500H0.500Z" fill="#8e7e57" stroke="#fcd98a" stroke-width="1"/><path d="M0.500 2.100H6.800" stroke="#fcd98a" stroke-width=".9"/></svg>
<span class="t" style="left:1599.3px;top:304.09999999999997px;font-size:12px;color:#fafafa;letter-spacing:-0.286px;">FastEndpoints</span>
<svg style="left:1556px;top:329.09999999999997px;" width="8" height="8" viewBox="0 0 8 8"><path d="M7 0.500V7H0.500z" fill="#e0e0e0"/></svg>
<svg style="left:1578.9px;top:327.09999999999997px;" width="14.2" height="11" viewBox="0 0 14.2 11"><path d="M0.500 0.500H6.500L8 2H13.700V10.500H0.500Z" fill="#8e7e57" stroke="#fcd98a" stroke-width="1"/><path d="M0.500 2.100H6.800" stroke="#fcd98a" stroke-width=".9"/></svg>
<span class="t" style="left:1599.3px;top:323.09999999999997px;font-size:12px;color:#fafafa;letter-spacing:-0.129px;">Frontend</span>
<svg style="left:1573.7px;top:346.2px;" width="8" height="11" viewBox="0 0 8 11"><path d="M1.500 0.800L5.900 5.500 1.500 10.200z" fill="none" stroke="#dcdcdc" stroke-width="1"/></svg>
<svg style="left:1586.7px;top:347.2px;" width="7" height="9.5" viewBox="0 0 7 9.5"><rect x="0.800" y="4.300" width="5.400" height="4.200" rx=".6" fill="#1c2a38" stroke="#55aaff" stroke-width="1.200"/><path d="M2 4V2.600a1.500 1.500 0 0 1 3 0V4" fill="none" stroke="#55aaff" stroke-width="1.100"/></svg>
<svg style="left:1595px;top:344.7px;" width="18" height="15" viewBox="0 0 18 15"><rect x="3" y="1.500" width="13.500" height="11" fill="#3a3a3a" stroke="#d0d0d0" stroke-width="1"/><path d="M3 3.800H16.500" stroke="#d0d0d0" stroke-width="1.400"/><circle cx="6" cy="10.2" r="5.2" fill="#6fcf6f"/><g stroke="#1f1f1f" stroke-width=".85" fill="none" opacity=".9"><ellipse cx="6" cy="10.2" rx="2.3400000000000003" ry="4.6000000000000005"/><path d="M1.4 8.6H10.6M1.4 11.799999999999999H10.6M6 5.499999999999999V14.899999999999999"/></g></svg>
<span class="t" style="left:1617.3px;top:342.09999999999997px;font-size:12px;color:#fafafa;letter-spacing:-0.229px;">ProductService.Ajax</span>
<svg style="left:1573.7px;top:365.2px;" width="8" height="11" viewBox="0 0 8 11"><path d="M1.500 0.800L5.900 5.500 1.500 10.200z" fill="none" stroke="#dcdcdc" stroke-width="1"/></svg>
<svg style="left:1586.7px;top:366.2px;" width="7" height="9.5" viewBox="0 0 7 9.5"><rect x="0.800" y="4.300" width="5.400" height="4.200" rx=".6" fill="#1c2a38" stroke="#55aaff" stroke-width="1.200"/><path d="M2 4V2.600a1.500 1.500 0 0 1 3 0V4" fill="none" stroke="#55aaff" stroke-width="1.100"/></svg>
<svg style="left:1595px;top:363.7px;" width="18" height="15" viewBox="0 0 18 15"><rect x="3" y="1.500" width="13.500" height="11" fill="#3a3a3a" stroke="#d0d0d0" stroke-width="1"/><path d="M3 3.800H16.500" stroke="#d0d0d0" stroke-width="1.400"/><circle cx="6" cy="10.2" r="5.2" fill="#6fcf6f"/><g stroke="#1f1f1f" stroke-width=".85" fill="none" opacity=".9"><ellipse cx="6" cy="10.2" rx="2.3400000000000003" ry="4.6000000000000005"/><path d="M1.4 8.6H10.6M1.4 11.799999999999999H10.6M6 5.499999999999999V14.899999999999999"/></g></svg>
<span class="t" style="left:1617.3px;top:361.09999999999997px;font-size:12px;color:#fafafa;letter-spacing:-0.379px;">ProductService.AjaxCRUD</span>
<svg style="left:1573.7px;top:384.2px;" width="8" height="11" viewBox="0 0 8 11"><path d="M1.500 0.800L5.900 5.500 1.500 10.200z" fill="none" stroke="#dcdcdc" stroke-width="1"/></svg>
<svg style="left:1586.7px;top:385.2px;" width="7" height="9.5" viewBox="0 0 7 9.5"><rect x="0.800" y="4.300" width="5.400" height="4.200" rx=".6" fill="#1c2a38" stroke="#55aaff" stroke-width="1.200"/><path d="M2 4V2.600a1.500 1.500 0 0 1 3 0V4" fill="none" stroke="#55aaff" stroke-width="1.100"/></svg>
<svg style="left:1595px;top:380.7px;" width="18" height="19" viewBox="0 0 18 19"><circle cx="11.2" cy="6.8" r="5.2" fill="#4aa8f5"/><g stroke="#1f1f1f" stroke-width=".85" fill="none" opacity=".9"><ellipse cx="11.2" cy="6.8" rx="2.3400000000000003" ry="4.6000000000000005"/><path d="M6.599999999999999 5.199999999999999H15.799999999999999M6.599999999999999 8.4H15.799999999999999M11.2 2.0999999999999996V11.5"/></g><rect x="1.500" y="10.500" width="8" height="6" fill="#333" stroke="#e0e0e0" stroke-width="1"/><path d="M1.500 12H9.500" stroke="#e0e0e0" stroke-width="1.200"/></svg>
<span class="t" style="left:1617.3px;top:380.09999999999997px;font-size:12px;color:#fafafa;letter-spacing:-0.108px;">ProductService.Angular</span>
<svg style="left:1573.7px;top:403.2px;" width="8" height="11" viewBox="0 0 8 11"><path d="M1.500 0.800L5.900 5.500 1.500 10.200z" fill="none" stroke="#dcdcdc" stroke-width="1"/></svg>
<svg style="left:1586.7px;top:404.2px;" width="7" height="9.5" viewBox="0 0 7 9.5"><rect x="0.800" y="4.300" width="5.400" height="4.200" rx=".6" fill="#1c2a38" stroke="#55aaff" stroke-width="1.200"/><path d="M2 4V2.600a1.500 1.500 0 0 1 3 0V4" fill="none" stroke="#55aaff" stroke-width="1.100"/></svg>
<svg style="left:1595px;top:399.7px;" width="18" height="19" viewBox="0 0 18 19"><circle cx="11.2" cy="6.8" r="5.2" fill="#4aa8f5"/><g stroke="#1f1f1f" stroke-width=".85" fill="none" opacity=".9"><ellipse cx="11.2" cy="6.8" rx="2.3400000000000003" ry="4.6000000000000005"/><path d="M6.599999999999999 5.199999999999999H15.799999999999999M6.599999999999999 8.4H15.799999999999999M11.2 2.0999999999999996V11.5"/></g><rect x="1.500" y="10.500" width="8" height="6" fill="#333" stroke="#e0e0e0" stroke-width="1"/><path d="M1.500 12H9.500" stroke="#e0e0e0" stroke-width="1.200"/></svg>
<span class="t" style="left:1617.3px;top:399.09999999999997px;font-size:12px;color:#fafafa;letter-spacing:-0.139px;">ProductService.AngularTyped</span>
<svg style="left:1573.7px;top:422.2px;" width="8" height="11" viewBox="0 0 8 11"><path d="M1.500 0.800L5.900 5.500 1.500 10.200z" fill="none" stroke="#dcdcdc" stroke-width="1"/></svg>
<svg style="left:1586.7px;top:423.2px;" width="7" height="9.5" viewBox="0 0 7 9.5"><rect x="0.800" y="4.300" width="5.400" height="4.200" rx=".6" fill="#1c2a38" stroke="#55aaff" stroke-width="1.200"/><path d="M2 4V2.600a1.500 1.500 0 0 1 3 0V4" fill="none" stroke="#55aaff" stroke-width="1.100"/></svg>
<svg style="left:1595px;top:418.7px;" width="18" height="19" viewBox="0 0 18 19"><circle cx="11.2" cy="6.8" r="5.2" fill="#4aa8f5"/><g stroke="#1f1f1f" stroke-width=".85" fill="none" opacity=".9"><ellipse cx="11.2" cy="6.8" rx="2.3400000000000003" ry="4.6000000000000005"/><path d="M6.599999999999999 5.199999999999999H15.799999999999999M6.599999999999999 8.4H15.799999999999999M11.2 2.0999999999999996V11.5"/></g><rect x="1.500" y="10.500" width="8" height="6" fill="#333" stroke="#e0e0e0" stroke-width="1"/><path d="M1.500 12H9.500" stroke="#e0e0e0" stroke-width="1.200"/></svg>
<span class="t" style="left:1617.3px;top:418.09999999999997px;font-size:12px;color:#fafafa;letter-spacing:-0.240px;">ProductService.AngularTypedCRUD</span>
<svg style="left:1573.7px;top:441.2px;" width="8" height="11" viewBox="0 0 8 11"><path d="M1.500 0.800L5.900 5.500 1.500 10.200z" fill="none" stroke="#dcdcdc" stroke-width="1"/></svg>
<svg style="left:1586.7px;top:442.2px;" width="7" height="9.5" viewBox="0 0 7 9.5"><rect x="0.800" y="4.300" width="5.400" height="4.200" rx=".6" fill="#1c2a38" stroke="#55aaff" stroke-width="1.200"/><path d="M2 4V2.600a1.500 1.500 0 0 1 3 0V4" fill="none" stroke="#55aaff" stroke-width="1.100"/></svg>
<svg style="left:1595px;top:439.7px;" width="18" height="15" viewBox="0 0 18 15"><rect x="3" y="1.500" width="13.500" height="11" fill="#3a3a3a" stroke="#d0d0d0" stroke-width="1"/><path d="M3 3.800H16.500" stroke="#d0d0d0" stroke-width="1.400"/><circle cx="6" cy="10.2" r="5.2" fill="#6fcf6f"/><g stroke="#1f1f1f" stroke-width=".85" fill="none" opacity=".9"><ellipse cx="6" cy="10.2" rx="2.3400000000000003" ry="4.6000000000000005"/><path d="M1.4 8.6H10.6M1.4 11.799999999999999H10.6M6 5.499999999999999V14.899999999999999"/></g></svg>
<span class="t" style="left:1617.3px;top:437.09999999999997px;font-size:12px;color:#fafafa;letter-spacing:-0.114px;">ProductService.AsmxWebMethod</span>
<svg style="left:1573.7px;top:460.2px;" width="8" height="11" viewBox="0 0 8 11"><path d="M1.500 0.800L5.900 5.500 1.500 10.200z" fill="none" stroke="#dcdcdc" stroke-width="1"/></svg>
<svg style="left:1586.7px;top:461.2px;" width="7" height="9.5" viewBox="0 0 7 9.5"><rect x="0.800" y="4.300" width="5.400" height="4.200" rx=".6" fill="#1c2a38" stroke="#55aaff" stroke-width="1.200"/><path d="M2 4V2.600a1.500 1.500 0 0 1 3 0V4" fill="none" stroke="#55aaff" stroke-width="1.100"/></svg>
<svg style="left:1595px;top:458.7px;" width="18" height="15" viewBox="0 0 18 15"><rect x="3" y="1.500" width="13.500" height="11" fill="#3a3a3a" stroke="#d0d0d0" stroke-width="1"/><path d="M3 3.800H16.500" stroke="#d0d0d0" stroke-width="1.400"/><circle cx="6" cy="10.2" r="5.2" fill="#6fcf6f"/><g stroke="#1f1f1f" stroke-width=".85" fill="none" opacity=".9"><ellipse cx="6" cy="10.2" rx="2.3400000000000003" ry="4.6000000000000005"/><path d="M1.4 8.6H10.6M1.4 11.799999999999999H10.6M6 5.499999999999999V14.899999999999999"/></g></svg>
<span class="t" style="left:1617.3px;top:456.09999999999997px;font-size:12px;color:#fafafa;letter-spacing:-0.214px;">ProductService.AsmxWebMethodCRUD</span>
<svg style="left:1573.7px;top:479.2px;" width="8" height="11" viewBox="0 0 8 11"><path d="M1.500 0.800L5.900 5.500 1.500 10.200z" fill="none" stroke="#dcdcdc" stroke-width="1"/></svg>
<svg style="left:1586.7px;top:480.2px;" width="7" height="9.5" viewBox="0 0 7 9.5"><rect x="0.800" y="4.300" width="5.400" height="4.200" rx=".6" fill="#1c2a38" stroke="#55aaff" stroke-width="1.200"/><path d="M2 4V2.600a1.500 1.500 0 0 1 3 0V4" fill="none" stroke="#55aaff" stroke-width="1.100"/></svg>
<svg style="left:1595px;top:477.7px;" width="18" height="15" viewBox="0 0 18 15"><rect x="3" y="1.500" width="13.500" height="11" fill="#3a3a3a" stroke="#d0d0d0" stroke-width="1"/><path d="M3 3.800H16.500" stroke="#d0d0d0" stroke-width="1.400"/><circle cx="6" cy="10.2" r="5.2" fill="#4aa8f5"/><g stroke="#1f1f1f" stroke-width=".85" fill="none" opacity=".9"><ellipse cx="6" cy="10.2" rx="2.3400000000000003" ry="4.6000000000000005"/><path d="M1.4 8.6H10.6M1.4 11.799999999999999H10.6M6 5.499999999999999V14.899999999999999"/></g></svg>
<span class="t" style="left:1617.3px;top:475.09999999999997px;font-size:12px;color:#fafafa;letter-spacing:-0.239px;">ProductService.Blazor</span>
<svg style="left:1573.7px;top:498.2px;" width="8" height="11" viewBox="0 0 8 11"><path d="M1.500 0.800L5.900 5.500 1.500 10.200z" fill="none" stroke="#dcdcdc" stroke-width="1"/></svg>
<svg style="left:1586.7px;top:499.2px;" width="7" height="9.5" viewBox="0 0 7 9.5"><rect x="0.800" y="4.300" width="5.400" height="4.200" rx=".6" fill="#1c2a38" stroke="#55aaff" stroke-width="1.200"/><path d="M2 4V2.600a1.500 1.500 0 0 1 3 0V4" fill="none" stroke="#55aaff" stroke-width="1.100"/></svg>
<svg style="left:1595px;top:496.7px;" width="18" height="15" viewBox="0 0 18 15"><rect x="3" y="1.500" width="13.500" height="11" fill="#3a3a3a" stroke="#d0d0d0" stroke-width="1"/><path d="M3 3.800H16.500" stroke="#d0d0d0" stroke-width="1.400"/><circle cx="6" cy="10.2" r="5.2" fill="#4aa8f5"/><g stroke="#1f1f1f" stroke-width=".85" fill="none" opacity=".9"><ellipse cx="6" cy="10.2" rx="2.3400000000000003" ry="4.6000000000000005"/><path d="M1.4 8.6H10.6M1.4 11.799999999999999H10.6M6 5.499999999999999V14.899999999999999"/></g></svg>
<span class="t" style="left:1617.3px;top:494.09999999999997px;font-size:12px;color:#fafafa;letter-spacing:-0.375px;">ProductService.BlazorCRUD</span>
<svg style="left:1573.7px;top:517.2px;" width="8" height="11" viewBox="0 0 8 11"><path d="M1.500 0.800L5.900 5.500 1.500 10.200z" fill="none" stroke="#dcdcdc" stroke-width="1"/></svg>
<svg style="left:1586.7px;top:518.2px;" width="7" height="9.5" viewBox="0 0 7 9.5"><rect x="0.800" y="4.300" width="5.400" height="4.200" rx=".6" fill="#1c2a38" stroke="#55aaff" stroke-width="1.200"/><path d="M2 4V2.600a1.500 1.500 0 0 1 3 0V4" fill="none" stroke="#55aaff" stroke-width="1.100"/></svg>
<svg style="left:1595px;top:515.7px;" width="18" height="15" viewBox="0 0 18 15"><rect x="3" y="1.500" width="13.500" height="11" fill="#3a3a3a" stroke="#d0d0d0" stroke-width="1"/><path d="M3 3.800H16.500" stroke="#d0d0d0" stroke-width="1.400"/><circle cx="6" cy="10.2" r="5.2" fill="#4aa8f5"/><g stroke="#1f1f1f" stroke-width=".85" fill="none" opacity=".9"><ellipse cx="6" cy="10.2" rx="2.3400000000000003" ry="4.6000000000000005"/><path d="M1.4 8.6H10.6M1.4 11.799999999999999H10.6M6 5.499999999999999V14.899999999999999"/></g></svg>
<span class="t" style="left:1617.3px;top:513.1px;font-size:12px;color:#fafafa;letter-spacing:-0.310px;">ProductService.BlazorServer</span>
<svg style="left:1573.7px;top:536.2px;" width="8" height="11" viewBox="0 0 8 11"><path d="M1.500 0.800L5.900 5.500 1.500 10.200z" fill="none" stroke="#dcdcdc" stroke-width="1"/></svg>
<svg style="left:1586.7px;top:537.2px;" width="7" height="9.5" viewBox="0 0 7 9.5"><rect x="0.800" y="4.300" width="5.400" height="4.200" rx=".6" fill="#1c2a38" stroke="#55aaff" stroke-width="1.200"/><path d="M2 4V2.600a1.500 1.500 0 0 1 3 0V4" fill="none" stroke="#55aaff" stroke-width="1.100"/></svg>
<svg style="left:1595px;top:534.7px;" width="18" height="15" viewBox="0 0 18 15"><rect x="3" y="1.500" width="13.500" height="11" fill="#3a3a3a" stroke="#d0d0d0" stroke-width="1"/><path d="M3 3.800H16.500" stroke="#d0d0d0" stroke-width="1.400"/><circle cx="6" cy="10.2" r="5.2" fill="#4aa8f5"/><g stroke="#1f1f1f" stroke-width=".85" fill="none" opacity=".9"><ellipse cx="6" cy="10.2" rx="2.3400000000000003" ry="4.6000000000000005"/><path d="M1.4 8.6H10.6M1.4 11.799999999999999H10.6M6 5.499999999999999V14.899999999999999"/></g></svg>
<span class="t" style="left:1617.3px;top:532.1px;font-size:12px;color:#fafafa;letter-spacing:-0.411px;">ProductService.BlazorServerCRUD</span>
<svg style="left:1573.7px;top:555.2px;" width="8" height="11" viewBox="0 0 8 11"><path d="M1.500 0.800L5.900 5.500 1.500 10.200z" fill="none" stroke="#dcdcdc" stroke-width="1"/></svg>
<svg style="left:1586.7px;top:556.2px;" width="7" height="9.5" viewBox="0 0 7 9.5"><rect x="0.800" y="4.300" width="5.400" height="4.200" rx=".6" fill="#1c2a38" stroke="#55aaff" stroke-width="1.200"/><path d="M2 4V2.600a1.500 1.500 0 0 1 3 0V4" fill="none" stroke="#55aaff" stroke-width="1.100"/></svg>
<svg style="left:1595px;top:553.7px;" width="18" height="15" viewBox="0 0 18 15"><rect x="3" y="1.500" width="13.500" height="11" fill="#3a3a3a" stroke="#d0d0d0" stroke-width="1"/><path d="M3 3.800H16.500" stroke="#d0d0d0" stroke-width="1.400"/><circle cx="6" cy="10.2" r="5.2" fill="#6fcf6f"/><g stroke="#1f1f1f" stroke-width=".85" fill="none" opacity=".9"><ellipse cx="6" cy="10.2" rx="2.3400000000000003" ry="4.6000000000000005"/><path d="M1.4 8.6H10.6M1.4 11.799999999999999H10.6M6 5.499999999999999V14.899999999999999"/></g></svg>
<span class="t" style="left:1617.3px;top:551.1px;font-size:12px;color:#fafafa;letter-spacing:-0.290px;">ProductService.Classic</span>
<svg style="left:1573.7px;top:574.2px;" width="8" height="11" viewBox="0 0 8 11"><path d="M1.500 0.800L5.900 5.500 1.500 10.200z" fill="none" stroke="#dcdcdc" stroke-width="1"/></svg>
<svg style="left:1586.7px;top:575.2px;" width="7" height="9.5" viewBox="0 0 7 9.5"><rect x="0.800" y="4.300" width="5.400" height="4.200" rx=".6" fill="#1c2a38" stroke="#55aaff" stroke-width="1.200"/><path d="M2 4V2.600a1.500 1.500 0 0 1 3 0V4" fill="none" stroke="#55aaff" stroke-width="1.100"/></svg>
<svg style="left:1595px;top:572.7px;" width="18" height="15" viewBox="0 0 18 15"><rect x="3" y="1.500" width="13.500" height="11" fill="#3a3a3a" stroke="#d0d0d0" stroke-width="1"/><path d="M3 3.800H16.500" stroke="#d0d0d0" stroke-width="1.400"/><circle cx="6" cy="10.2" r="5.2" fill="#6fcf6f"/><g stroke="#1f1f1f" stroke-width=".85" fill="none" opacity=".9"><ellipse cx="6" cy="10.2" rx="2.3400000000000003" ry="4.6000000000000005"/><path d="M1.4 8.6H10.6M1.4 11.799999999999999H10.6M6 5.499999999999999V14.899999999999999"/></g></svg>
<span class="t" style="left:1617.3px;top:570.1px;font-size:12px;color:#fafafa;letter-spacing:-0.386px;">ProductService.ClassicCRUD</span>
<svg style="left:1573.7px;top:593.2px;" width="8" height="11" viewBox="0 0 8 11"><path d="M1.500 0.800L5.900 5.500 1.500 10.200z" fill="none" stroke="#dcdcdc" stroke-width="1"/></svg>
<svg style="left:1597px;top:591.7px;" width="14" height="14" viewBox="0 0 14 14"><circle cx="7" cy="7" r="6" fill="none" stroke="#d0d0d0" stroke-width="1.100"/><ellipse cx="7" cy="7" rx="2.800" ry="6" fill="none" stroke="#d0d0d0" stroke-width="1"/><path d="M1.300 5H12.700M1.300 9H12.700" stroke="#d0d0d0" stroke-width="1"/></svg>
<span class="t" style="left:1617.3px;top:589.1px;font-size:12px;color:#fafafa;letter-spacing:-0.371px;">ProductService.Js</span>
<svg style="left:1573.7px;top:612.2px;" width="8" height="11" viewBox="0 0 8 11"><path d="M1.500 0.800L5.900 5.500 1.500 10.200z" fill="none" stroke="#dcdcdc" stroke-width="1"/></svg>
<svg style="left:1597px;top:610.7px;" width="14" height="14" viewBox="0 0 14 14"><circle cx="7" cy="7" r="6" fill="none" stroke="#d0d0d0" stroke-width="1.100"/><ellipse cx="7" cy="7" rx="2.800" ry="6" fill="none" stroke="#d0d0d0" stroke-width="1"/><path d="M1.300 5H12.700M1.300 9H12.700" stroke="#d0d0d0" stroke-width="1"/></svg>
<span class="t" style="left:1617.3px;top:608.1px;font-size:12px;color:#fafafa;letter-spacing:-0.494px;">ProductService.JsCRUD</span>
<svg style="left:1573.7px;top:631.2px;" width="8" height="11" viewBox="0 0 8 11"><path d="M1.500 0.800L5.900 5.500 1.500 10.200z" fill="none" stroke="#dcdcdc" stroke-width="1"/></svg>
<svg style="left:1586.7px;top:632.2px;" width="7" height="9.5" viewBox="0 0 7 9.5"><rect x="0.800" y="4.300" width="5.400" height="4.200" rx=".6" fill="#1c2a38" stroke="#55aaff" stroke-width="1.200"/><path d="M2 4V2.600a1.500 1.500 0 0 1 3 0V4" fill="none" stroke="#55aaff" stroke-width="1.100"/></svg>
<svg style="left:1595px;top:629.7px;" width="18" height="15" viewBox="0 0 18 15"><rect x="3" y="1.500" width="13.500" height="11" fill="#3a3a3a" stroke="#d0d0d0" stroke-width="1"/><path d="M3 3.800H16.500" stroke="#d0d0d0" stroke-width="1.400"/><circle cx="6" cy="10.2" r="5.2" fill="#4aa8f5"/><g stroke="#1f1f1f" stroke-width=".85" fill="none" opacity=".9"><ellipse cx="6" cy="10.2" rx="2.3400000000000003" ry="4.6000000000000005"/><path d="M1.4 8.6H10.6M1.4 11.799999999999999H10.6M6 5.499999999999999V14.899999999999999"/></g></svg>
<span class="t" style="left:1617.3px;top:627.1px;font-size:12px;color:#fafafa;letter-spacing:-0.150px;">ProductService.Mvc</span>
<svg style="left:1573.7px;top:650.2px;" width="8" height="11" viewBox="0 0 8 11"><path d="M1.500 0.800L5.900 5.500 1.500 10.200z" fill="none" stroke="#dcdcdc" stroke-width="1"/></svg>
<svg style="left:1586.7px;top:651.2px;" width="7" height="9.5" viewBox="0 0 7 9.5"><rect x="0.800" y="4.300" width="5.400" height="4.200" rx=".6" fill="#1c2a38" stroke="#55aaff" stroke-width="1.200"/><path d="M2 4V2.600a1.500 1.500 0 0 1 3 0V4" fill="none" stroke="#55aaff" stroke-width="1.100"/></svg>
<svg style="left:1595px;top:648.7px;" width="18" height="15" viewBox="0 0 18 15"><rect x="3" y="1.500" width="13.500" height="11" fill="#3a3a3a" stroke="#d0d0d0" stroke-width="1"/><path d="M3 3.800H16.500" stroke="#d0d0d0" stroke-width="1.400"/><circle cx="6" cy="10.2" r="5.2" fill="#4aa8f5"/><g stroke="#1f1f1f" stroke-width=".85" fill="none" opacity=".9"><ellipse cx="6" cy="10.2" rx="2.3400000000000003" ry="4.6000000000000005"/><path d="M1.4 8.6H10.6M1.4 11.799999999999999H10.6M6 5.499999999999999V14.899999999999999"/></g></svg>
<span class="t" style="left:1617.3px;top:646.1px;font-size:12px;color:#fafafa;letter-spacing:-0.289px;">ProductService.MvcCRUD</span>
<svg style="left:1573.7px;top:669.2px;" width="8" height="11" viewBox="0 0 8 11"><path d="M1.500 0.800L5.900 5.500 1.500 10.200z" fill="none" stroke="#dcdcdc" stroke-width="1"/></svg>
<svg style="left:1586.7px;top:670.2px;" width="7" height="9.5" viewBox="0 0 7 9.5"><rect x="0.800" y="4.300" width="5.400" height="4.200" rx=".6" fill="#1c2a38" stroke="#55aaff" stroke-width="1.200"/><path d="M2 4V2.600a1.500 1.500 0 0 1 3 0V4" fill="none" stroke="#55aaff" stroke-width="1.100"/></svg>
<svg style="left:1595px;top:667.7px;" width="18" height="15" viewBox="0 0 18 15"><rect x="3" y="1.500" width="13.500" height="11" fill="#3a3a3a" stroke="#d0d0d0" stroke-width="1"/><path d="M3 3.800H16.500" stroke="#d0d0d0" stroke-width="1.400"/><circle cx="6" cy="10.2" r="5.2" fill="#4aa8f5"/><g stroke="#1f1f1f" stroke-width=".85" fill="none" opacity=".9"><ellipse cx="6" cy="10.2" rx="2.3400000000000003" ry="4.6000000000000005"/><path d="M1.4 8.6H10.6M1.4 11.799999999999999H10.6M6 5.499999999999999V14.899999999999999"/></g></svg>
<span class="t" style="left:1617.3px;top:665.1px;font-size:12px;color:#fafafa;letter-spacing:-0.301px;">ProductService.Razor</span>
<svg style="left:1573.7px;top:688.2px;" width="8" height="11" viewBox="0 0 8 11"><path d="M1.500 0.800L5.900 5.500 1.500 10.200z" fill="none" stroke="#dcdcdc" stroke-width="1"/></svg>
<svg style="left:1586.7px;top:689.2px;" width="7" height="9.5" viewBox="0 0 7 9.5"><rect x="0.800" y="4.300" width="5.400" height="4.200" rx=".6" fill="#1c2a38" stroke="#55aaff" stroke-width="1.200"/><path d="M2 4V2.600a1.500 1.500 0 0 1 3 0V4" fill="none" stroke="#55aaff" stroke-width="1.100"/></svg>
<svg style="left:1595px;top:686.7px;" width="18" height="15" viewBox="0 0 18 15"><rect x="3" y="1.500" width="13.500" height="11" fill="#3a3a3a" stroke="#d0d0d0" stroke-width="1"/><path d="M3 3.800H16.500" stroke="#d0d0d0" stroke-width="1.400"/><circle cx="6" cy="10.2" r="5.2" fill="#4aa8f5"/><g stroke="#1f1f1f" stroke-width=".85" fill="none" opacity=".9"><ellipse cx="6" cy="10.2" rx="2.3400000000000003" ry="4.6000000000000005"/><path d="M1.4 8.6H10.6M1.4 11.799999999999999H10.6M6 5.499999999999999V14.899999999999999"/></g></svg>
<span class="t" style="left:1617.3px;top:684.1px;font-size:12px;color:#fafafa;letter-spacing:-0.416px;">ProductService.RazorCRUD</span>
<svg style="left:1573.7px;top:707.2px;" width="8" height="11" viewBox="0 0 8 11"><path d="M1.500 0.800L5.900 5.500 1.500 10.200z" fill="none" stroke="#dcdcdc" stroke-width="1"/></svg>
<svg style="left:1586.7px;top:708.2px;" width="7" height="9.5" viewBox="0 0 7 9.5"><rect x="0.800" y="4.300" width="5.400" height="4.200" rx=".6" fill="#1c2a38" stroke="#55aaff" stroke-width="1.200"/><path d="M2 4V2.600a1.500 1.500 0 0 1 3 0V4" fill="none" stroke="#55aaff" stroke-width="1.100"/></svg>
<svg style="left:1595px;top:705.7px;" width="18" height="15" viewBox="0 0 18 15"><rect x="3" y="1.500" width="13.500" height="11" fill="#3a3a3a" stroke="#d0d0d0" stroke-width="1"/><path d="M3 3.800H16.500" stroke="#d0d0d0" stroke-width="1.400"/><circle cx="6" cy="10.2" r="5.2" fill="#4aa8f5"/><g stroke="#1f1f1f" stroke-width=".85" fill="none" opacity=".9"><ellipse cx="6" cy="10.2" rx="2.3400000000000003" ry="4.6000000000000005"/><path d="M1.4 8.6H10.6M1.4 11.799999999999999H10.6M6 5.499999999999999V14.899999999999999"/></g></svg>
<span class="t" style="left:1617.3px;top:703.1px;font-size:12px;color:#fafafa;letter-spacing:-0.163px;">ProductService.SignalrNew</span>
<svg style="left:1573.7px;top:726.2px;" width="8" height="11" viewBox="0 0 8 11"><path d="M1.500 0.800L5.900 5.500 1.500 10.200z" fill="none" stroke="#dcdcdc" stroke-width="1"/></svg>
<svg style="left:1586.7px;top:727.2px;" width="7" height="9.5" viewBox="0 0 7 9.5"><rect x="0.800" y="4.300" width="5.400" height="4.200" rx=".6" fill="#1c2a38" stroke="#55aaff" stroke-width="1.200"/><path d="M2 4V2.600a1.500 1.500 0 0 1 3 0V4" fill="none" stroke="#55aaff" stroke-width="1.100"/></svg>
<svg style="left:1595px;top:724.7px;" width="18" height="15" viewBox="0 0 18 15"><rect x="3" y="1.500" width="13.500" height="11" fill="#3a3a3a" stroke="#d0d0d0" stroke-width="1"/><path d="M3 3.800H16.500" stroke="#d0d0d0" stroke-width="1.400"/><circle cx="6" cy="10.2" r="5.2" fill="#4aa8f5"/><g stroke="#1f1f1f" stroke-width=".85" fill="none" opacity=".9"><ellipse cx="6" cy="10.2" rx="2.3400000000000003" ry="4.6000000000000005"/><path d="M1.4 8.6H10.6M1.4 11.799999999999999H10.6M6 5.499999999999999V14.899999999999999"/></g></svg>
<span class="t" style="left:1617.3px;top:722.1px;font-size:12px;color:#fafafa;letter-spacing:-0.301px;">ProductService.SignalrNewCRUD</span>
<svg style="left:1573.7px;top:745.2px;" width="8" height="11" viewBox="0 0 8 11"><path d="M1.500 0.800L5.900 5.500 1.500 10.200z" fill="none" stroke="#dcdcdc" stroke-width="1"/></svg>
<svg style="left:1586.7px;top:746.2px;" width="7" height="9.5" viewBox="0 0 7 9.5"><rect x="0.800" y="4.300" width="5.400" height="4.200" rx=".6" fill="#1c2a38" stroke="#55aaff" stroke-width="1.200"/><path d="M2 4V2.600a1.500 1.500 0 0 1 3 0V4" fill="none" stroke="#55aaff" stroke-width="1.100"/></svg>
<svg style="left:1595px;top:743.7px;" width="18" height="15" viewBox="0 0 18 15"><rect x="3" y="1.500" width="13.500" height="11" fill="#3a3a3a" stroke="#d0d0d0" stroke-width="1"/><path d="M3 3.800H16.500" stroke="#d0d0d0" stroke-width="1.400"/><circle cx="6" cy="10.2" r="5.2" fill="#6fcf6f"/><g stroke="#1f1f1f" stroke-width=".85" fill="none" opacity=".9"><ellipse cx="6" cy="10.2" rx="2.3400000000000003" ry="4.6000000000000005"/><path d="M1.4 8.6H10.6M1.4 11.799999999999999H10.6M6 5.499999999999999V14.899999999999999"/></g></svg>
<span class="t" style="left:1617.3px;top:741.1px;font-size:12px;color:#fafafa;letter-spacing:-0.189px;">ProductService.SignalrOld</span>
<svg style="left:1573.7px;top:764.2px;" width="8" height="11" viewBox="0 0 8 11"><path d="M1.500 0.800L5.900 5.500 1.500 10.200z" fill="none" stroke="#dcdcdc" stroke-width="1"/></svg>
<svg style="left:1586.7px;top:765.2px;" width="7" height="9.5" viewBox="0 0 7 9.5"><rect x="0.800" y="4.300" width="5.400" height="4.200" rx=".6" fill="#1c2a38" stroke="#55aaff" stroke-width="1.200"/><path d="M2 4V2.600a1.500 1.500 0 0 1 3 0V4" fill="none" stroke="#55aaff" stroke-width="1.100"/></svg>
<svg style="left:1595px;top:762.7px;" width="18" height="15" viewBox="0 0 18 15"><rect x="3" y="1.500" width="13.500" height="11" fill="#3a3a3a" stroke="#d0d0d0" stroke-width="1"/><path d="M3 3.800H16.500" stroke="#d0d0d0" stroke-width="1.400"/><circle cx="6" cy="10.2" r="5.2" fill="#6fcf6f"/><g stroke="#1f1f1f" stroke-width=".85" fill="none" opacity=".9"><ellipse cx="6" cy="10.2" rx="2.3400000000000003" ry="4.6000000000000005"/><path d="M1.4 8.6H10.6M1.4 11.799999999999999H10.6M6 5.499999999999999V14.899999999999999"/></g></svg>
<span class="t" style="left:1617.3px;top:760.1px;font-size:12px;color:#fafafa;letter-spacing:-0.290px;">ProductService.SignalrOldCRUD</span>
<svg style="left:1573.7px;top:783.2px;" width="8" height="11" viewBox="0 0 8 11"><path d="M1.500 0.800L5.900 5.500 1.500 10.200z" fill="none" stroke="#dcdcdc" stroke-width="1"/></svg>
<svg style="left:1586.7px;top:784.2px;" width="7" height="9.5" viewBox="0 0 7 9.5"><rect x="0.800" y="4.300" width="5.400" height="4.200" rx=".6" fill="#1c2a38" stroke="#55aaff" stroke-width="1.200"/><path d="M2 4V2.600a1.500 1.500 0 0 1 3 0V4" fill="none" stroke="#55aaff" stroke-width="1.100"/></svg>
<svg style="left:1595px;top:781.7px;" width="18" height="15" viewBox="0 0 18 15"><rect x="3" y="1.500" width="13.500" height="11" fill="#3a3a3a" stroke="#d0d0d0" stroke-width="1"/><path d="M3 3.800H16.500" stroke="#d0d0d0" stroke-width="1.400"/><circle cx="6" cy="10.2" r="5.2" fill="#6fcf6f"/><g stroke="#1f1f1f" stroke-width=".85" fill="none" opacity=".9"><ellipse cx="6" cy="10.2" rx="2.3400000000000003" ry="4.6000000000000005"/><path d="M1.4 8.6H10.6M1.4 11.799999999999999H10.6M6 5.499999999999999V14.899999999999999"/></g></svg>
<span class="t" style="left:1617.3px;top:779.1px;font-size:12px;color:#fafafa;letter-spacing:-0.219px;">ProductService.UpdatePanel</span>
<svg style="left:1573.7px;top:802.2px;" width="8" height="11" viewBox="0 0 8 11"><path d="M1.500 0.800L5.900 5.500 1.500 10.200z" fill="none" stroke="#dcdcdc" stroke-width="1"/></svg>
<svg style="left:1586.7px;top:803.2px;" width="7" height="9.5" viewBox="0 0 7 9.5"><rect x="0.800" y="4.300" width="5.400" height="4.200" rx=".6" fill="#1c2a38" stroke="#55aaff" stroke-width="1.200"/><path d="M2 4V2.600a1.500 1.500 0 0 1 3 0V4" fill="none" stroke="#55aaff" stroke-width="1.100"/></svg>
<svg style="left:1595px;top:800.7px;" width="18" height="15" viewBox="0 0 18 15"><rect x="3" y="1.500" width="13.500" height="11" fill="#3a3a3a" stroke="#d0d0d0" stroke-width="1"/><path d="M3 3.800H16.500" stroke="#d0d0d0" stroke-width="1.400"/><circle cx="6" cy="10.2" r="5.2" fill="#6fcf6f"/><g stroke="#1f1f1f" stroke-width=".85" fill="none" opacity=".9"><ellipse cx="6" cy="10.2" rx="2.3400000000000003" ry="4.6000000000000005"/><path d="M1.4 8.6H10.6M1.4 11.799999999999999H10.6M6 5.499999999999999V14.899999999999999"/></g></svg>
<span class="t" style="left:1617.3px;top:798.1px;font-size:12px;color:#fafafa;letter-spacing:-0.325px;">ProductService.UpdatePanelCRUD</span>
<svg style="left:1556px;top:821.2px;" width="8" height="11" viewBox="0 0 8 11"><path d="M1.500 0.800L5.900 5.500 1.500 10.200z" fill="none" stroke="#dcdcdc" stroke-width="1"/></svg>
<svg style="left:1578.9px;top:821.1px;" width="14.2" height="11" viewBox="0 0 14.2 11"><path d="M0.500 0.500H6.500L8 2H13.700V10.500H0.500Z" fill="#8e7e57" stroke="#fcd98a" stroke-width="1"/><path d="M0.500 2.100H6.800" stroke="#fcd98a" stroke-width=".9"/></svg>
<span class="t" style="left:1599.3px;top:817.1px;font-size:12px;color:#fafafa;letter-spacing:-0.373px;">Starter</span>
<svg style="left:1556px;top:840.2px;" width="8" height="11" viewBox="0 0 8 11"><path d="M1.500 0.800L5.900 5.500 1.500 10.200z" fill="none" stroke="#dcdcdc" stroke-width="1"/></svg>
<svg style="left:1578.9px;top:840.1px;" width="14.2" height="11" viewBox="0 0 14.2 11"><path d="M0.500 0.500H6.500L8 2H13.700V10.500H0.500Z" fill="#8e7e57" stroke="#fcd98a" stroke-width="1"/><path d="M0.500 2.100H6.800" stroke="#fcd98a" stroke-width=".9"/></svg>
<span class="t" style="left:1599.3px;top:836.1px;font-size:12px;color:#fafafa;letter-spacing:-0.602px;">Tests</span>
<div style="left:1895px;top:209px;width:17px;height:644px;background:#2a2a2a"></div>
<div style="left:1899.5px;top:226.5px;width:8.5px;height:594px;background:#4d4d4d"></div>
<svg style="left:1899px;top:214px;" width="10" height="7" viewBox="0 0 10 7"><path d="M0.500 6.500h9L5 1z" fill="#8a8a8a"/></svg>
<svg style="left:1899px;top:843px;" width="10" height="7" viewBox="0 0 10 7"><path d="M0.500 0.500h9L5 6z" fill="#8a8a8a"/></svg>
<div style="left:1546px;top:857px;width:74px;height:20px;background:#1f1f1f;border:1px solid #3d3d3d;border-top:1px solid #1f1f1f;box-sizing:border-box"></div>
<span class="t" style="left:1551.3px;top:856.3px;font-size:12px;color:#fafafa;letter-spacing:-0.254px;">Solution E...</span>
<span class="t" style="left:1626.3px;top:856.3px;font-size:12px;color:#c8c8c8;letter-spacing:-0.219px;">Git Chang...</span>
<span class="t" style="left:1701px;top:856.3px;font-size:12px;color:#c8c8c8;letter-spacing:-0.336px;">Test Explo...</span>
<span class="t" style="left:1777.3px;top:856.3px;font-size:12px;color:#c8c8c8;letter-spacing:-0.150px;">GitHub C...</span>
<span class="t" style="left:1852.3px;top:856.3px;font-size:12px;color:#c8c8c8;letter-spacing:-0.443px;">Class View</span>
<div style="left:333px;top:96px;width:1074px;height:854px;background:#f0f0f0;border-radius:8px;overflow:hidden;box-shadow:0 0 0 1px rgba(0,0,0,.35)"><div style="left:0;top:0;width:1074px;height:30px;background:#e5f7f7"></div></div>
<span class="t" style="left:342.2px;top:101.2px;font-size:12px;color:#111;letter-spacing:-0.006px;">Solution 'MicrosoftSolution' Property Pages</span>
<span class="t" style="left:1336px;top:101.0px;font-size:12px;color:#111;font-weight:bold;letter-spacing:-1.530px;">?</span>
<svg style="left:1377px;top:103.4px;" width="14" height="14" viewBox="0 0 14 14"><path d="M1.800 1.800l10.400 10.400M12.200 1.800l-10.400 10.400" stroke="#111" stroke-width="1.100"/></svg>
<span class="t" style="left:344.7px;top:138.7px;font-size:12px;color:#a2a2a2;letter-spacing:0.099px;">Configuration:</span>
<div style="left:434px;top:139px;width:359px;height:21px;background:#fafafa;border-radius:2px"></div>
<span class="t" style="left:437.5px;top:139.5px;font-size:12px;color:#6d6d6d;letter-spacing:0.399px;">N/A</span>
<svg style="left:780px;top:146.5px;" width="10" height="7" viewBox="0 0 10 7"><path d="M1 1.200L5 5.200 9 1.200" fill="none" stroke="#a8a8a8" stroke-width="1.1"/></svg>
<span class="t" style="left:804.25px;top:138.7px;font-size:12px;color:#a2a2a2;letter-spacing:0.082px;">Platform:</span>
<div style="left:866px;top:139px;width:360px;height:21px;background:#fafafa;border-radius:2px"></div>
<span class="t" style="left:869.25px;top:139.5px;font-size:12px;color:#6d6d6d;letter-spacing:0.665px;">N/A</span>
<svg style="left:1211.7px;top:146.5px;" width="10" height="7" viewBox="0 0 10 7"><path d="M1 1.200L5 5.200 9 1.200" fill="none" stroke="#a8a8a8" stroke-width="1.1"/></svg>
<div style="left:1240px;top:137.6px;width:154.4px;height:21.8px;background:#fafafa;border:1px solid #ebebeb;border-radius:4px;box-sizing:border-box"></div>
<span class="t" style="left:1250.7px;top:138.9px;font-size:12px;color:#868686;letter-spacing:0.016px;">Configuration Manager...</span>
<div style="left:344px;top:172px;width:186px;height:732px;background:#f5f5f5;border:1px solid #828790;box-sizing:border-box"></div>
<div style="left:346px;top:192px;width:182px;height:18px;background:#cccedb"></div>
<svg style="left:352px;top:179px;" width="8" height="8" viewBox="0 0 8 8"><path d="M7.500 0.500V7.500H0.500z" fill="#222"/></svg>
<svg style="left:352px;top:268px;" width="9" height="11" viewBox="0 0 9 11"><path d="M1.500 1.200L6.800 5.500 1.500 9.800z" fill="none" stroke="#222" stroke-width="1"/></svg>
<span class="t" style="left:368.3px;top:172.8px;font-size:12px;color:#111;letter-spacing:-0.018px;">Common Properties</span>
<span class="t" style="left:387.5px;top:190.7px;font-size:12px;color:#111;letter-spacing:-0.113px;">Configure Startup Projects</span>
<span class="t" style="left:387.5px;top:208.7px;font-size:12px;color:#111;letter-spacing:-0.220px;">Project Dependencies</span>
<span class="t" style="left:387.5px;top:226.7px;font-size:12px;color:#111;letter-spacing:-0.225px;">Code Analysis Settings</span>
<span class="t" style="left:387.5px;top:244.7px;font-size:12px;color:#111;letter-spacing:-0.344px;">Debug Source Files</span>
<span class="t" style="left:368.3px;top:262.7px;font-size:12px;color:#111;letter-spacing:-0.000px;">Configuration Properties</span>
<div style="left:345px;top:885px;width:184px;height:18px;background:#f0f0f0"></div>
<div style="left:365px;top:893px;width:146px;height:2px;background:#8b8b8b;border-radius:1px"></div>
<svg style="left:540px;top:174.3px;" width="14" height="14" viewBox="0 0 14 14"><circle cx="7" cy="7" r="5.700" fill="#fff" stroke="#333" stroke-width="1"/></svg>
<svg style="left:540px;top:198.2px;" width="14" height="14" viewBox="0 0 14 14"><circle cx="7" cy="7" r="5.700" fill="#fff" stroke="#333" stroke-width="1"/></svg>
<svg style="left:540px;top:253.5px;" width="14" height="14" viewBox="0 0 14 14"><circle cx="7" cy="7" r="5.700" fill="#fff" stroke="#333" stroke-width="1"/><circle cx="7" cy="7" r="3" fill="#111"/></svg>
<span class="t" style="left:559.5px;top:171.5px;font-size:12px;color:#111;letter-spacing:-0.086px;">Current selection</span>
<span class="t" style="left:559.5px;top:195.5px;font-size:12px;color:#111;letter-spacing:-0.025px;">Single startup project:</span>
<span class="t" style="left:559.5px;top:250.5px;font-size:12px;color:#111;letter-spacing:0.084px;">Multiple startup projects:</span>
<div style="left:560px;top:222px;width:736px;height:22px;background:#f3f3f3;border:1px solid #d9d9d9;box-sizing:border-box"></div>
<svg style="left:1281.7px;top:229.5px;" width="10" height="7" viewBox="0 0 10 7"><path d="M1 1.200L5 5.200 9 1.200" fill="none" stroke="#c0c0c0" stroke-width="1.1"/></svg>
<span class="t" style="left:560.5px;top:271.5px;font-size:12px;color:#111;letter-spacing:-0.126px;">Launch profiles</span>
<div style="left:560px;top:294px;width:24px;height:24px;background:#e1e1e1;border:1px solid #adadad;box-sizing:border-box"></div>
<div style="left:588px;top:294px;width:24px;height:24px;background:#e1e1e1;border:1px solid #adadad;box-sizing:border-box"></div>
<div style="left:616px;top:294px;width:24px;height:24px;background:#e1e1e1;border:1px solid #adadad;box-sizing:border-box"></div>
<div style="left:644px;top:294px;width:24px;height:24px;background:#e1e1e1;border:1px solid #adadad;box-sizing:border-box"></div>
<svg style="left:560px;top:294px;" width="108" height="24" viewBox="0 0 108 24"><g fill="none" stroke-width="1">
<g stroke="#c8960c" stroke-width=".9"><path d="M4 7.300h6.600M7.300 4v6.600M5 5l4.600 4.600M9.600 5L5 9.600"/></g>
<path d="M5.500 11V16.300H18.300V9H10.800" stroke="#3c3c3c" stroke-width="1.100"/><path d="M8.300 12.300H16.800" stroke="#3c3c3c" stroke-width="1.100"/>
<path d="M38.500 10.500V7H47.300V12H43.500" stroke="#777" stroke-width="1.100"/><path d="M41.500 9.200H46" stroke="#999"/>
<rect x="32.700" y="11.800" width="9.600" height="5.400" fill="#e1e1e1" stroke="#3c3c3c" stroke-width="1.100"/><path d="M34.500 14.500H40.500" stroke="#3c3c3c" stroke-width="1.100"/>
<path d="M60.300 4.300l5.400 5.400M65.700 4.300l-5.400 5.400" stroke="#d02040" stroke-width="1.300"/>
<path d="M61.800 12.500V17.300H74.300V10H67.500" stroke="#3c3c3c" stroke-width="1.100"/><path d="M64.500 13.500H72.800" stroke="#3c3c3c" stroke-width="1.100"/>
<path d="M98 9.500H89.500V14.500H98" stroke="#6e6e6e" stroke-width="1.100"/><path d="M91.500 12H96" stroke="#999" stroke-width="1.200"/><path d="M101.200 9.500Q102.800 12 101.200 14.500" stroke="#6e6e6e"/>
<path d="M97.600 6.200H99.200M100 6.200H101.600M97.600 17.600H99.200M100 17.600H101.600M99.600 6.500V17.300" stroke="#222" stroke-width="1"/>
</g></svg>
<div style="left:560px;top:322px;width:192px;height:528px;background:#fff;border-style:solid;border-width:1px 2px 2px 2px;border-color:#a8a8a8 #a2a2a2 #7c7c7c #767676;box-sizing:border-box"></div>
<span class="t" style="left:572.5px;top:330.0px;font-size:12px;color:#111;letter-spacing:-0.685px;">ClassicCRUD</span>
<span class="t" style="left:572.5px;top:360.0px;font-size:12px;color:#111;letter-spacing:-0.382px;">Razor</span>
<span class="t" style="left:572.5px;top:390.0px;font-size:12px;color:#111;letter-spacing:-0.653px;">RazorCRUD</span>
<span class="t" style="left:572.5px;top:420.0px;font-size:12px;color:#111;letter-spacing:-0.066px;">Mvc</span>
<span class="t" style="left:572.5px;top:450.0px;font-size:12px;color:#111;letter-spacing:-0.547px;">NvcCRUD</span>
<span class="t" style="left:572.5px;top:480.0px;font-size:12px;color:#111;letter-spacing:-0.211px;">Ajax</span>
<span class="t" style="left:572.5px;top:510.0px;font-size:12px;color:#111;letter-spacing:-0.564px;">AjaxCRUD</span>
<span class="t" style="left:572.5px;top:540.0px;font-size:12px;color:#111;letter-spacing:-1.250px;">Js</span>
<span class="t" style="left:572.5px;top:570.0px;font-size:12px;color:#111;letter-spacing:-0.301px;">Grpc</span>
<span class="t" style="left:572.5px;top:600.0px;font-size:12px;color:#111;letter-spacing:0.146px;">WebMethod</span>
<span class="t" style="left:572.5px;top:630.0px;font-size:12px;color:#111;letter-spacing:-0.165px;">WebMethodCRUD</span>
<span class="t" style="left:572.5px;top:660.0px;font-size:12px;color:#111;letter-spacing:-0.156px;">SignalrNew</span>
<span class="t" style="left:572.5px;top:690.0px;font-size:12px;color:#111;letter-spacing:-0.407px;">Signarr NEW CRUD</span>
<span class="t" style="left:572.5px;top:720.0px;font-size:12px;color:#111;letter-spacing:-0.071px;">Signal old</span>
<span class="t" style="left:572.5px;top:750.0px;font-size:12px;color:#111;letter-spacing:-0.428px;">Old CRUD</span>
<span class="t" style="left:572.5px;top:780.0px;font-size:12px;color:#111;letter-spacing:-0.322px;">BlazorServer</span>
<span class="t" style="left:572.5px;top:810.0px;font-size:12px;color:#111;letter-spacing:-0.433px;">BlazorServer CRUD</span>
<div style="left:563px;top:834.5px;width:170px;height:14px;background:#f4f4f4;border:1px solid #dcdcdc;border-bottom:none;box-sizing:border-box;overflow:hidden"><span class="t" style="left:8.500px;top:5.500px;font-size:12px;color:#111;letter-spacing:-0.3px">UpdatePanel</span></div>
<div style="left:733px;top:324px;width:17px;height:524px;background:#f0f0f0"></div>
<div style="left:733px;top:341px;width:17px;height:438px;background:#cdcdcd"></div>
<svg style="left:736.5px;top:330px;" width="10" height="7" viewBox="0 0 10 7"><path d="M1 5.500L5 1.500 9 5.500" fill="none" stroke="#9a9a9a" stroke-width="1.100"/></svg>
<svg style="left:736.5px;top:836.5px;" width="10" height="7" viewBox="0 0 10 7"><path d="M1 1.200L5 5.200 9 1.200" fill="none" stroke="#9a9a9a" stroke-width="1.1"/></svg>
<div style="left:561px;top:860px;width:14px;height:14px;background:#fff;border:1px solid #333;box-sizing:border-box"></div>
<span class="t" style="left:580px;top:857.0px;font-size:12px;color:#111;letter-spacing:-0.080px;">Share profile</span>
<div style="left:1364px;top:294px;width:20px;height:20px;background:#fdfdfd;border:1px solid #adadad;box-sizing:border-box"></div>
<div style="left:1364px;top:320px;width:20px;height:20px;background:#fdfdfd;border:1px solid #adadad;box-sizing:border-box"></div>
<svg style="left:1367px;top:297px;" width="14" height="14" viewBox="0 0 14 14"><path d="M7 12.500V2M2.500 6.300L7 1.800l4.500 4.500" fill="none" stroke="#333" stroke-width="1.100"/></svg>
<svg style="left:1367px;top:323px;" width="14" height="14" viewBox="0 0 14 14"><path d="M7 1.500V12M2.500 7.700L7 12.200l4.500-4.500" fill="none" stroke="#333" stroke-width="1.100"/></svg>
<div style="left:1149px;top:915px;width:74px;height:23px;background:#fdfdfd;border:2px solid #0a74d4;border-radius:4px;box-sizing:border-box"></div>
<div style="left:1235px;top:915px;width:74px;height:23px;background:#fdfdfd;border:1px solid #d2d2d2;border-radius:4px;box-sizing:border-box"></div>
<div style="left:1321px;top:915px;width:74px;height:23px;background:#fdfdfd;border:1px solid #d2d2d2;border-radius:4px;box-sizing:border-box"></div>
<span class="t" style="left:1178.3px;top:917.0px;font-size:12px;color:#111;letter-spacing:-0.419px;">OK</span>
<span class="t" style="left:1254.3px;top:917.0px;font-size:12px;color:#111;letter-spacing:-0.309px;">Cancel</span>
<span class="t" style="left:1341.7px;top:917.0px;font-size:12px;color:#111;letter-spacing:0.396px;">Apply</span>
<div style="left:763px;top:294px;width:596px;height:556px;background:#fff;border:1px solid #777;box-sizing:border-box;box-shadow:inset 0 0 0 1px #6a9ad4"></div>
<div style="left:766px;top:296px;width:575px;height:22px;background:linear-gradient(#ffffff,#ffffff 45%,#f3f5f8);border-bottom:1px solid #d5d5d5;box-sizing:border-box"></div>
<div style="left:956.5px;top:296px;width:1px;height:22px;background:#dedfe0"></div>
<div style="left:1148.5px;top:296px;width:1px;height:22px;background:#dedfe0"></div>
<div style="left:1340.5px;top:296px;width:1px;height:22px;background:#e8e8e8"></div>
<span class="t" style="left:770px;top:297.75px;font-size:12px;color:#111;letter-spacing:-0.228px;">Project</span>
<span class="t" style="left:962px;top:297.75px;font-size:12px;color:#111;letter-spacing:0.025px;">Action</span>
<span class="t" style="left:1154px;top:297.75px;font-size:12px;color:#111;letter-spacing:-0.069px;">Debug Target</span>
<div style="left:1341px;top:296px;width:17px;height:22px;background:#f0f0f0"></div>
<span class="t" style="left:767.9px;top:321.8px;font-size:12px;color:#111;letter-spacing:-0.336px;">ProductService.ClearAPI</span>
<div style="left:958px;top:320.5px;width:189.5px;height:21px;background:linear-gradient(#f2f2f2,#e4e4e4);border:1px solid #adadad;box-sizing:border-box;box-shadow:inset 0 0 0 1px rgba(255,255,255,.55)"></div>
<span class="t" style="left:963.75px;top:322.1px;font-size:12px;color:#111;letter-spacing:0.116px;">Start without debugging</span>
<svg style="left:1133.75px;top:327.8px;" width="8" height="6" viewBox="0 0 8 6"><path d="M0.800 1L4 4.200 7.200 1" fill="none" stroke="#333" stroke-width="1.300"/></svg>
<div style="left:1150px;top:320.5px;width:189.5px;height:21px;background:linear-gradient(#f2f2f2,#e4e4e4);border:1px solid #adadad;box-sizing:border-box;box-shadow:inset 0 0 0 1px rgba(255,255,255,.55)"></div>
<svg style="left:1325.75px;top:327.8px;" width="8" height="6" viewBox="0 0 8 6"><path d="M0.800 1L4 4.200 7.200 1" fill="none" stroke="#333" stroke-width="1.300"/></svg>
<span class="t" style="left:767.9px;top:345.8px;font-size:12px;color:#111;letter-spacing:-0.231px;">ProductService.UpdatePanel</span>
<div style="left:958px;top:344.5px;width:189.5px;height:21px;background:linear-gradient(#f2f2f2,#e4e4e4);border:1px solid #adadad;box-sizing:border-box;box-shadow:inset 0 0 0 1px rgba(255,255,255,.55)"></div>
<span class="t" style="left:963.75px;top:346.1px;font-size:12px;color:#111;letter-spacing:-0.319px;">Start</span>
<svg style="left:1133.75px;top:351.8px;" width="8" height="6" viewBox="0 0 8 6"><path d="M0.800 1L4 4.200 7.200 1" fill="none" stroke="#333" stroke-width="1.300"/></svg>
<div style="left:1150px;top:344.5px;width:189.5px;height:21px;background:linear-gradient(#f2f2f2,#e4e4e4);border:1px solid #adadad;box-sizing:border-box;box-shadow:inset 0 0 0 1px rgba(255,255,255,.55)"></div>
<svg style="left:1325.75px;top:351.8px;" width="8" height="6" viewBox="0 0 8 6"><path d="M0.800 1L4 4.200 7.200 1" fill="none" stroke="#333" stroke-width="1.300"/></svg>
<span class="t" style="left:767.9px;top:369.8px;font-size:12px;color:#111;letter-spacing:-0.316px;">ProductService.Tests</span>
<div style="left:958px;top:368.5px;width:189.5px;height:21px;background:linear-gradient(#f2f2f2,#e4e4e4);border:1px solid #adadad;box-sizing:border-box;box-shadow:inset 0 0 0 1px rgba(255,255,255,.55)"></div>
<span class="t" style="left:963.75px;top:370.1px;font-size:12px;color:#111;letter-spacing:-0.097px;">None</span>
<svg style="left:1133.75px;top:375.8px;" width="8" height="6" viewBox="0 0 8 6"><path d="M0.800 1L4 4.200 7.200 1" fill="none" stroke="#333" stroke-width="1.300"/></svg>
<div style="left:1150px;top:368.5px;width:189.5px;height:21px;background:#f1f1f1;border:1px solid #dadada;box-sizing:border-box"></div>
<svg style="left:1325.75px;top:375.8px;" width="8" height="6" viewBox="0 0 8 6"><path d="M0.800 1L4 4.200 7.200 1" fill="none" stroke="#c4c4c4" stroke-width="1.300"/></svg>
<span class="t" style="left:767.9px;top:393.8px;font-size:12px;color:#111;letter-spacing:-0.151px;">StartApiAndBlazorHosts</span>
<div style="left:958px;top:392.5px;width:189.5px;height:21px;background:linear-gradient(#f2f2f2,#e4e4e4);border:1px solid #adadad;box-sizing:border-box;box-shadow:inset 0 0 0 1px rgba(255,255,255,.55)"></div>
<span class="t" style="left:963.75px;top:394.1px;font-size:12px;color:#111;letter-spacing:-0.097px;">None</span>
<svg style="left:1133.75px;top:399.8px;" width="8" height="6" viewBox="0 0 8 6"><path d="M0.800 1L4 4.200 7.200 1" fill="none" stroke="#333" stroke-width="1.300"/></svg>
<div style="left:1150px;top:392.5px;width:189.5px;height:21px;background:#f1f1f1;border:1px solid #dadada;box-sizing:border-box"></div>
<svg style="left:1325.75px;top:399.8px;" width="8" height="6" viewBox="0 0 8 6"><path d="M0.800 1L4 4.200 7.200 1" fill="none" stroke="#c4c4c4" stroke-width="1.300"/></svg>
<span class="t" style="left:767.9px;top:417.8px;font-size:12px;color:#111;letter-spacing:-0.218px;">Fastenpoints.ProductService.Api1</span>
<div style="left:958px;top:416.5px;width:189.5px;height:21px;background:linear-gradient(#f2f2f2,#e4e4e4);border:1px solid #adadad;box-sizing:border-box;box-shadow:inset 0 0 0 1px rgba(255,255,255,.55)"></div>
<span class="t" style="left:963.75px;top:418.1px;font-size:12px;color:#111;letter-spacing:-0.097px;">None</span>
<svg style="left:1133.75px;top:423.8px;" width="8" height="6" viewBox="0 0 8 6"><path d="M0.800 1L4 4.200 7.200 1" fill="none" stroke="#333" stroke-width="1.300"/></svg>
<div style="left:1150px;top:416.5px;width:189.5px;height:21px;background:#f1f1f1;border:1px solid #dadada;box-sizing:border-box"></div>
<svg style="left:1325.75px;top:423.8px;" width="8" height="6" viewBox="0 0 8 6"><path d="M0.800 1L4 4.200 7.200 1" fill="none" stroke="#c4c4c4" stroke-width="1.300"/></svg>
<span class="t" style="left:767.9px;top:441.8px;font-size:12px;color:#111;letter-spacing:-0.208px;">Fastenpoints.ProductService.Api2</span>
<div style="left:958px;top:440.5px;width:189.5px;height:21px;background:linear-gradient(#f2f2f2,#e4e4e4);border:1px solid #adadad;box-sizing:border-box;box-shadow:inset 0 0 0 1px rgba(255,255,255,.55)"></div>
<span class="t" style="left:963.75px;top:442.1px;font-size:12px;color:#111;letter-spacing:-0.097px;">None</span>
<svg style="left:1133.75px;top:447.8px;" width="8" height="6" viewBox="0 0 8 6"><path d="M0.800 1L4 4.200 7.200 1" fill="none" stroke="#333" stroke-width="1.300"/></svg>
<div style="left:1150px;top:440.5px;width:189.5px;height:21px;background:#f1f1f1;border:1px solid #dadada;box-sizing:border-box"></div>
<svg style="left:1325.75px;top:447.8px;" width="8" height="6" viewBox="0 0 8 6"><path d="M0.800 1L4 4.200 7.200 1" fill="none" stroke="#c4c4c4" stroke-width="1.300"/></svg>
<span class="t" style="left:767.9px;top:465.8px;font-size:12px;color:#111;letter-spacing:-0.296px;">FastEndpointsStart1</span>
<div style="left:958px;top:464.5px;width:189.5px;height:21px;background:linear-gradient(#f2f2f2,#e4e4e4);border:1px solid #adadad;box-sizing:border-box;box-shadow:inset 0 0 0 1px rgba(255,255,255,.55)"></div>
<span class="t" style="left:963.75px;top:466.1px;font-size:12px;color:#111;letter-spacing:-0.097px;">None</span>
<svg style="left:1133.75px;top:471.8px;" width="8" height="6" viewBox="0 0 8 6"><path d="M0.800 1L4 4.200 7.200 1" fill="none" stroke="#333" stroke-width="1.300"/></svg>
<div style="left:1150px;top:464.5px;width:189.5px;height:21px;background:#f1f1f1;border:1px solid #dadada;box-sizing:border-box"></div>
<svg style="left:1325.75px;top:471.8px;" width="8" height="6" viewBox="0 0 8 6"><path d="M0.800 1L4 4.200 7.200 1" fill="none" stroke="#c4c4c4" stroke-width="1.300"/></svg>
<span class="t" style="left:767.9px;top:489.8px;font-size:12px;color:#111;letter-spacing:-0.259px;">FastEndpointsStart2</span>
<div style="left:958px;top:488.5px;width:189.5px;height:21px;background:linear-gradient(#f2f2f2,#e4e4e4);border:1px solid #adadad;box-sizing:border-box;box-shadow:inset 0 0 0 1px rgba(255,255,255,.55)"></div>
<span class="t" style="left:963.75px;top:490.1px;font-size:12px;color:#111;letter-spacing:-0.097px;">None</span>
<svg style="left:1133.75px;top:495.8px;" width="8" height="6" viewBox="0 0 8 6"><path d="M0.800 1L4 4.200 7.200 1" fill="none" stroke="#333" stroke-width="1.300"/></svg>
<div style="left:1150px;top:488.5px;width:189.5px;height:21px;background:#f1f1f1;border:1px solid #dadada;box-sizing:border-box"></div>
<svg style="left:1325.75px;top:495.8px;" width="8" height="6" viewBox="0 0 8 6"><path d="M0.800 1L4 4.200 7.200 1" fill="none" stroke="#c4c4c4" stroke-width="1.300"/></svg>
<span class="t" style="left:767.9px;top:513.8px;font-size:12px;color:#111;letter-spacing:-0.151px;">ProductService.AppHost</span>
<div style="left:958px;top:512.5px;width:189.5px;height:21px;background:linear-gradient(#f2f2f2,#e4e4e4);border:1px solid #adadad;box-sizing:border-box;box-shadow:inset 0 0 0 1px rgba(255,255,255,.55)"></div>
<span class="t" style="left:963.75px;top:514.0999999999999px;font-size:12px;color:#111;letter-spacing:-0.097px;">None</span>
<svg style="left:1133.75px;top:519.8px;" width="8" height="6" viewBox="0 0 8 6"><path d="M0.800 1L4 4.200 7.200 1" fill="none" stroke="#333" stroke-width="1.300"/></svg>
<div style="left:1150px;top:512.5px;width:189.5px;height:21px;background:#f1f1f1;border:1px solid #dadada;box-sizing:border-box"></div>
<svg style="left:1325.75px;top:519.8px;" width="8" height="6" viewBox="0 0 8 6"><path d="M0.800 1L4 4.200 7.200 1" fill="none" stroke="#c4c4c4" stroke-width="1.300"/></svg>
<span class="t" style="left:767.9px;top:537.8px;font-size:12px;color:#111;letter-spacing:-0.268px;">ProductService.Blazor</span>
<div style="left:958px;top:536.5px;width:189.5px;height:21px;background:linear-gradient(#f2f2f2,#e4e4e4);border:1px solid #adadad;box-sizing:border-box;box-shadow:inset 0 0 0 1px rgba(255,255,255,.55)"></div>
<span class="t" style="left:963.75px;top:538.0999999999999px;font-size:12px;color:#111;letter-spacing:-0.097px;">None</span>
<svg style="left:1133.75px;top:543.8px;" width="8" height="6" viewBox="0 0 8 6"><path d="M0.800 1L4 4.200 7.200 1" fill="none" stroke="#333" stroke-width="1.300"/></svg>
<div style="left:1150px;top:536.5px;width:189.5px;height:21px;background:#f1f1f1;border:1px solid #dadada;box-sizing:border-box"></div>
<svg style="left:1325.75px;top:543.8px;" width="8" height="6" viewBox="0 0 8 6"><path d="M0.800 1L4 4.200 7.200 1" fill="none" stroke="#c4c4c4" stroke-width="1.300"/></svg>
<span class="t" style="left:767.9px;top:561.8px;font-size:12px;color:#111;letter-spacing:-0.167px;">ProductService.Angular</span>
<div style="left:958px;top:560.5px;width:189.5px;height:21px;background:linear-gradient(#f2f2f2,#e4e4e4);border:1px solid #adadad;box-sizing:border-box;box-shadow:inset 0 0 0 1px rgba(255,255,255,.55)"></div>
<span class="t" style="left:963.75px;top:562.0999999999999px;font-size:12px;color:#111;letter-spacing:-0.097px;">None</span>
<svg style="left:1133.75px;top:567.8px;" width="8" height="6" viewBox="0 0 8 6"><path d="M0.800 1L4 4.200 7.200 1" fill="none" stroke="#333" stroke-width="1.300"/></svg>
<div style="left:1150px;top:560.5px;width:189.5px;height:21px;background:#f1f1f1;border:1px solid #dadada;box-sizing:border-box"></div>
<svg style="left:1325.75px;top:567.8px;" width="8" height="6" viewBox="0 0 8 6"><path d="M0.800 1L4 4.200 7.200 1" fill="none" stroke="#c4c4c4" stroke-width="1.300"/></svg>
<span class="t" style="left:767.9px;top:585.8px;font-size:12px;color:#111;letter-spacing:-0.188px;">ProductService.Domain</span>
<div style="left:958px;top:584.5px;width:189.5px;height:21px;background:linear-gradient(#f2f2f2,#e4e4e4);border:1px solid #adadad;box-sizing:border-box;box-shadow:inset 0 0 0 1px rgba(255,255,255,.55)"></div>
<span class="t" style="left:963.75px;top:586.0999999999999px;font-size:12px;color:#111;letter-spacing:-0.097px;">None</span>
<svg style="left:1133.75px;top:591.8px;" width="8" height="6" viewBox="0 0 8 6"><path d="M0.800 1L4 4.200 7.200 1" fill="none" stroke="#333" stroke-width="1.300"/></svg>
<div style="left:1150px;top:584.5px;width:189.5px;height:21px;background:#f1f1f1;border:1px solid #dadada;box-sizing:border-box"></div>
<svg style="left:1325.75px;top:591.8px;" width="8" height="6" viewBox="0 0 8 6"><path d="M0.800 1L4 4.200 7.200 1" fill="none" stroke="#c4c4c4" stroke-width="1.300"/></svg>
<span class="t" style="left:767.9px;top:609.8px;font-size:12px;color:#111;letter-spacing:-0.138px;">ProductService.Infrastructure</span>
<div style="left:958px;top:608.5px;width:189.5px;height:21px;background:linear-gradient(#f2f2f2,#e4e4e4);border:1px solid #adadad;box-sizing:border-box;box-shadow:inset 0 0 0 1px rgba(255,255,255,.55)"></div>
<span class="t" style="left:963.75px;top:610.0999999999999px;font-size:12px;color:#111;letter-spacing:-0.097px;">None</span>
<svg style="left:1133.75px;top:615.8px;" width="8" height="6" viewBox="0 0 8 6"><path d="M0.800 1L4 4.200 7.200 1" fill="none" stroke="#333" stroke-width="1.300"/></svg>
<div style="left:1150px;top:608.5px;width:189.5px;height:21px;background:#f1f1f1;border:1px solid #dadada;box-sizing:border-box"></div>
<svg style="left:1325.75px;top:615.8px;" width="8" height="6" viewBox="0 0 8 6"><path d="M0.800 1L4 4.200 7.200 1" fill="none" stroke="#c4c4c4" stroke-width="1.300"/></svg>
<span class="t" style="left:767.9px;top:633.8px;font-size:12px;color:#111;letter-spacing:-0.173px;">ProductService.AngularTyped</span>
<div style="left:958px;top:632.5px;width:189.5px;height:21px;background:linear-gradient(#f2f2f2,#e4e4e4);border:1px solid #adadad;box-sizing:border-box;box-shadow:inset 0 0 0 1px rgba(255,255,255,.55)"></div>
<span class="t" style="left:963.75px;top:634.0999999999999px;font-size:12px;color:#111;letter-spacing:-0.097px;">None</span>
<svg style="left:1133.75px;top:639.8px;" width="8" height="6" viewBox="0 0 8 6"><path d="M0.800 1L4 4.200 7.200 1" fill="none" stroke="#333" stroke-width="1.300"/></svg>
<div style="left:1150px;top:632.5px;width:189.5px;height:21px;background:#f1f1f1;border:1px solid #dadada;box-sizing:border-box"></div>
<svg style="left:1325.75px;top:639.8px;" width="8" height="6" viewBox="0 0 8 6"><path d="M0.800 1L4 4.200 7.200 1" fill="none" stroke="#c4c4c4" stroke-width="1.300"/></svg>
<span class="t" style="left:767.9px;top:657.8px;font-size:12px;color:#111;letter-spacing:-0.359px;">ProductService.BlazorCRUD</span>
<div style="left:958px;top:656.5px;width:189.5px;height:21px;background:linear-gradient(#f2f2f2,#e4e4e4);border:1px solid #adadad;box-sizing:border-box;box-shadow:inset 0 0 0 1px rgba(255,255,255,.55)"></div>
<span class="t" style="left:963.75px;top:658.0999999999999px;font-size:12px;color:#111;letter-spacing:-0.097px;">None</span>
<svg style="left:1133.75px;top:663.8px;" width="8" height="6" viewBox="0 0 8 6"><path d="M0.800 1L4 4.200 7.200 1" fill="none" stroke="#333" stroke-width="1.300"/></svg>
<div style="left:1150px;top:656.5px;width:189.5px;height:21px;background:#f1f1f1;border:1px solid #dadada;box-sizing:border-box"></div>
<svg style="left:1325.75px;top:663.8px;" width="8" height="6" viewBox="0 0 8 6"><path d="M0.800 1L4 4.200 7.200 1" fill="none" stroke="#c4c4c4" stroke-width="1.300"/></svg>
<span class="t" style="left:767.9px;top:681.8px;font-size:12px;color:#111;letter-spacing:-0.259px;">ProductService.AngularTypedCRUD</span>
<div style="left:958px;top:680.5px;width:189.5px;height:21px;background:linear-gradient(#f2f2f2,#e4e4e4);border:1px solid #adadad;box-sizing:border-box;box-shadow:inset 0 0 0 1px rgba(255,255,255,.55)"></div>
<span class="t" style="left:963.75px;top:682.0999999999999px;font-size:12px;color:#111;letter-spacing:-0.097px;">None</span>
<svg style="left:1133.75px;top:687.8px;" width="8" height="6" viewBox="0 0 8 6"><path d="M0.800 1L4 4.200 7.200 1" fill="none" stroke="#333" stroke-width="1.300"/></svg>
<div style="left:1150px;top:680.5px;width:189.5px;height:21px;background:#f1f1f1;border:1px solid #dadada;box-sizing:border-box"></div>
<svg style="left:1325.75px;top:687.8px;" width="8" height="6" viewBox="0 0 8 6"><path d="M0.800 1L4 4.200 7.200 1" fill="none" stroke="#c4c4c4" stroke-width="1.300"/></svg>
<span class="t" style="left:767.9px;top:705.8px;font-size:12px;color:#111;letter-spacing:-0.363px;">ProductService.Classic</span>
<div style="left:958px;top:704.5px;width:189.5px;height:21px;background:linear-gradient(#f2f2f2,#e4e4e4);border:1px solid #adadad;box-sizing:border-box;box-shadow:inset 0 0 0 1px rgba(255,255,255,.55)"></div>
<span class="t" style="left:963.75px;top:706.0999999999999px;font-size:12px;color:#111;letter-spacing:-0.097px;">None</span>
<svg style="left:1133.75px;top:711.8px;" width="8" height="6" viewBox="0 0 8 6"><path d="M0.800 1L4 4.200 7.200 1" fill="none" stroke="#333" stroke-width="1.300"/></svg>
<div style="left:1150px;top:704.5px;width:189.5px;height:21px;background:#f1f1f1;border:1px solid #dadada;box-sizing:border-box"></div>
<svg style="left:1325.75px;top:711.8px;" width="8" height="6" viewBox="0 0 8 6"><path d="M0.800 1L4 4.200 7.200 1" fill="none" stroke="#c4c4c4" stroke-width="1.300"/></svg>
<span class="t" style="left:767.9px;top:729.8px;font-size:12px;color:#111;letter-spacing:-0.421px;">ProductService.ClassicCRUD</span>
<div style="left:958px;top:728.5px;width:189.5px;height:21px;background:linear-gradient(#f2f2f2,#e4e4e4);border:1px solid #adadad;box-sizing:border-box;box-shadow:inset 0 0 0 1px rgba(255,255,255,.55)"></div>
<span class="t" style="left:963.75px;top:730.0999999999999px;font-size:12px;color:#111;letter-spacing:-0.097px;">None</span>
<svg style="left:1133.75px;top:735.8px;" width="8" height="6" viewBox="0 0 8 6"><path d="M0.800 1L4 4.200 7.200 1" fill="none" stroke="#333" stroke-width="1.300"/></svg>
<div style="left:1150px;top:728.5px;width:189.5px;height:21px;background:#f1f1f1;border:1px solid #dadada;box-sizing:border-box"></div>
<svg style="left:1325.75px;top:735.8px;" width="8" height="6" viewBox="0 0 8 6"><path d="M0.800 1L4 4.200 7.200 1" fill="none" stroke="#c4c4c4" stroke-width="1.300"/></svg>
<span class="t" style="left:767.9px;top:753.8px;font-size:12px;color:#111;letter-spacing:-0.296px;">ProductService.Razor</span>
<div style="left:958px;top:752.5px;width:189.5px;height:21px;background:linear-gradient(#f2f2f2,#e4e4e4);border:1px solid #adadad;box-sizing:border-box;box-shadow:inset 0 0 0 1px rgba(255,255,255,.55)"></div>
<span class="t" style="left:963.75px;top:754.0999999999999px;font-size:12px;color:#111;letter-spacing:-0.097px;">None</span>
<svg style="left:1133.75px;top:759.8px;" width="8" height="6" viewBox="0 0 8 6"><path d="M0.800 1L4 4.200 7.200 1" fill="none" stroke="#333" stroke-width="1.300"/></svg>
<div style="left:1150px;top:752.5px;width:189.5px;height:21px;background:#f1f1f1;border:1px solid #dadada;box-sizing:border-box"></div>
<svg style="left:1325.75px;top:759.8px;" width="8" height="6" viewBox="0 0 8 6"><path d="M0.800 1L4 4.200 7.200 1" fill="none" stroke="#c4c4c4" stroke-width="1.300"/></svg>
<span class="t" style="left:767.9px;top:776.8px;font-size:12px;color:#111;letter-spacing:-0.217px;">ProductService.Mvc</span>
<div style="left:958px;top:775.5px;width:189.5px;height:21px;background:linear-gradient(#f2f2f2,#e4e4e4);border:1px solid #adadad;box-sizing:border-box;box-shadow:inset 0 0 0 1px rgba(255,255,255,.55)"></div>
<span class="t" style="left:963.75px;top:777.0999999999999px;font-size:12px;color:#111;letter-spacing:-0.097px;">None</span>
<svg style="left:1133.75px;top:782.8px;" width="8" height="6" viewBox="0 0 8 6"><path d="M0.800 1L4 4.200 7.200 1" fill="none" stroke="#333" stroke-width="1.300"/></svg>
<div style="left:1150px;top:775.5px;width:189.5px;height:21px;background:#f1f1f1;border:1px solid #dadada;box-sizing:border-box"></div>
<svg style="left:1325.75px;top:782.8px;" width="8" height="6" viewBox="0 0 8 6"><path d="M0.800 1L4 4.200 7.200 1" fill="none" stroke="#c4c4c4" stroke-width="1.300"/></svg>
<span class="t" style="left:767.9px;top:800.8px;font-size:12px;color:#111;letter-spacing:-0.416px;">ProductService.RazorCRUD</span>
<div style="left:958px;top:799.5px;width:189.5px;height:21px;background:linear-gradient(#f2f2f2,#e4e4e4);border:1px solid #adadad;box-sizing:border-box;box-shadow:inset 0 0 0 1px rgba(255,255,255,.55)"></div>
<span class="t" style="left:963.75px;top:801.0999999999999px;font-size:12px;color:#111;letter-spacing:-0.097px;">None</span>
<svg style="left:1133.75px;top:806.8px;" width="8" height="6" viewBox="0 0 8 6"><path d="M0.800 1L4 4.200 7.200 1" fill="none" stroke="#333" stroke-width="1.300"/></svg>
<div style="left:1150px;top:799.5px;width:189.5px;height:21px;background:#f1f1f1;border:1px solid #dadada;box-sizing:border-box"></div>
<svg style="left:1325.75px;top:806.8px;" width="8" height="6" viewBox="0 0 8 6"><path d="M0.800 1L4 4.200 7.200 1" fill="none" stroke="#c4c4c4" stroke-width="1.300"/></svg>
<span class="t" style="left:767.9px;top:824.8px;font-size:12px;color:#111;letter-spacing:-0.330px;">ProductService.MvcCRUD</span>
<div style="left:958px;top:823.5px;width:189.5px;height:21px;background:linear-gradient(#f2f2f2,#e4e4e4);border:1px solid #adadad;box-sizing:border-box;box-shadow:inset 0 0 0 1px rgba(255,255,255,.55)"></div>
<span class="t" style="left:963.75px;top:825.0999999999999px;font-size:12px;color:#111;letter-spacing:-0.097px;">None</span>
<svg style="left:1133.75px;top:830.8px;" width="8" height="6" viewBox="0 0 8 6"><path d="M0.800 1L4 4.200 7.200 1" fill="none" stroke="#333" stroke-width="1.300"/></svg>
<div style="left:1150px;top:823.5px;width:189.5px;height:21px;background:#f1f1f1;border:1px solid #dadada;box-sizing:border-box"></div>
<svg style="left:1325.75px;top:830.8px;" width="8" height="6" viewBox="0 0 8 6"><path d="M0.800 1L4 4.200 7.200 1" fill="none" stroke="#c4c4c4" stroke-width="1.300"/></svg>
<div style="left:958px;top:847.5px;width:189.5px;height:0.5px;background:#efefef;border:1px solid #adadad;border-bottom:none;box-sizing:border-box"></div>
<div style="left:1150px;top:847.5px;width:189.5px;height:0.5px;background:#f0f0f0;border:1px solid #dadada;border-bottom:none;box-sizing:border-box"></div>
<div style="left:1341px;top:318px;width:17px;height:530px;background:#f0f0f0"></div>
<div style="left:1341px;top:336px;width:17px;height:271px;background:#cdcdcd"></div>
<svg style="left:1344.5px;top:325.5px;" width="10" height="7" viewBox="0 0 10 7"><path d="M1 5.500L5 1.500 9 5.500" fill="none" stroke="#9a9a9a" stroke-width="1.100"/></svg>
<svg style="left:1344.5px;top:837px;" width="10" height="7" viewBox="0 0 10 7"><path d="M1 1.200L5 5.200 9 1.200" fill="none" stroke="#7a7a7a" stroke-width="1.100"/></svg>
</div></body></html>
